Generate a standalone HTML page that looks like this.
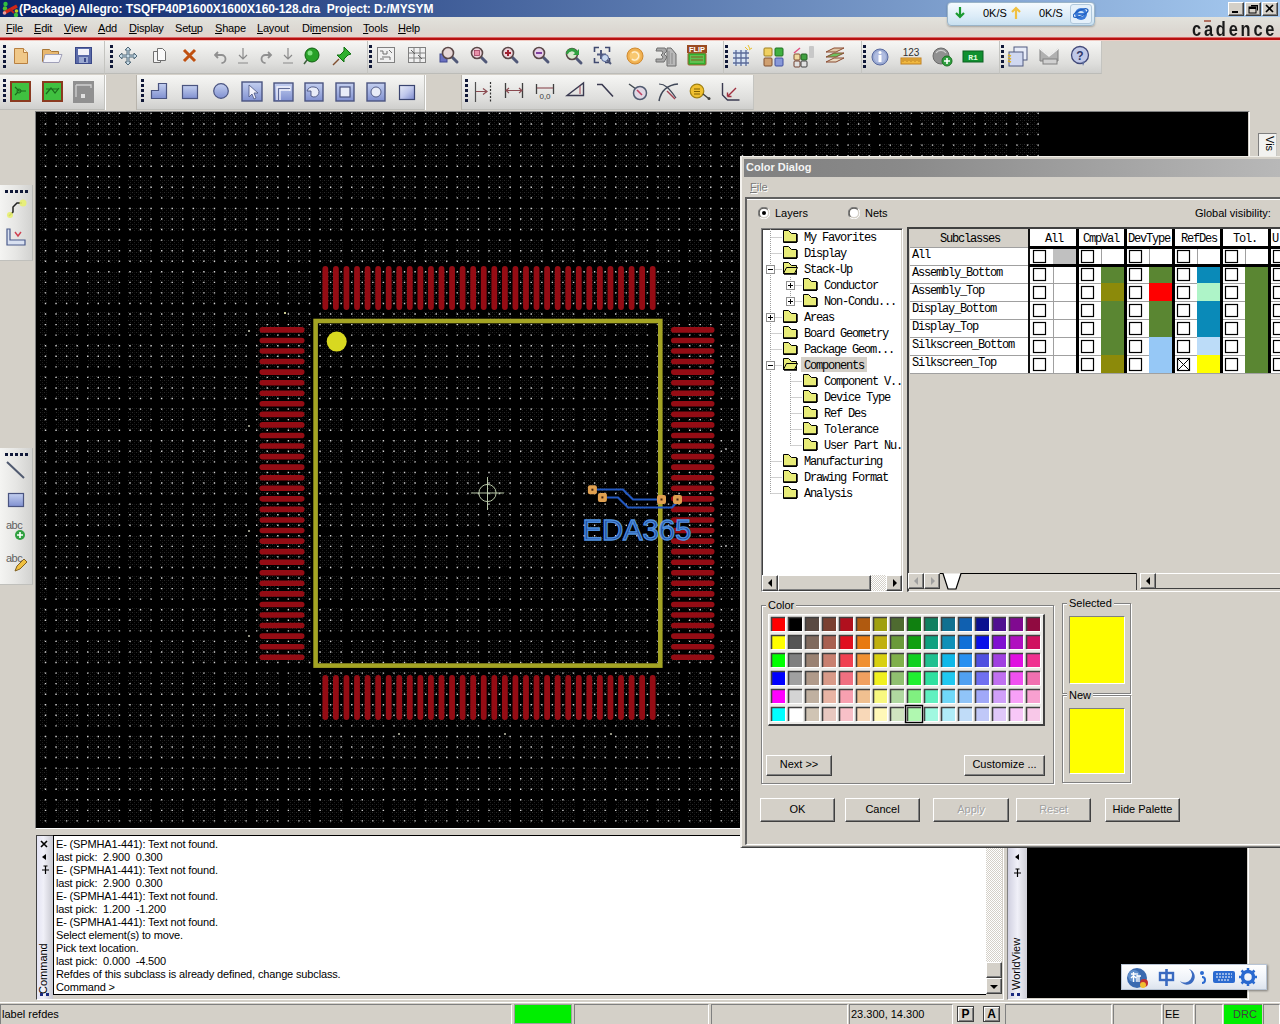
<!DOCTYPE html>
<html><head><meta charset="utf-8"><title>Allegro</title>
<style>
*{margin:0;padding:0;box-sizing:border-box}
html,body{width:1280px;height:1024px;overflow:hidden;background:#d4d0c8;font-family:"Liberation Sans",sans-serif;font-size:11px;color:#000}
.a{position:absolute}
.t{position:absolute;white-space:nowrap;line-height:1}
.mono{font-family:"Liberation Mono",monospace;font-size:12px;letter-spacing:-1.2px;white-space:nowrap;position:absolute;line-height:1}
.btn{position:absolute;background:#d4d0c8;border-top:1px solid #fff;border-left:1px solid #fff;border-right:1px solid #404040;border-bottom:1px solid #404040;box-shadow:inset -1px -1px 0 #808080;text-align:center;font-size:12px}
.sunk{border-top:1px solid #808080;border-left:1px solid #808080;border-right:1px solid #fff;border-bottom:1px solid #fff}
.grp{position:absolute;border:1px solid #808080;box-shadow:1px 1px 0 #fff, inset 1px 1px 0 #fff}
.glab{position:absolute;background:#d4d0c8;padding:0 2px;font-size:11px;line-height:12px}
</style></head><body>

<div class="a" style="left:0;top:0;width:1280px;height:17px;background:linear-gradient(90deg,#0a246a 0%,#a6caf0 100%)"></div>
<svg class="a" style="left:1px;top:1px" width="18" height="16" viewBox="0 0 18 16">
<circle cx="4.5" cy="3" r="2.2" fill="#30c040"/><circle cx="4" cy="7.5" r="2.2" fill="#50c030"/><circle cx="15" cy="14" r="2.2" fill="#40c040"/><circle cx="15.5" cy="10" r="1.8" fill="#c0d020"/>
<path d="M3 12 L16 5" stroke="#d02818" stroke-width="3.5"/><path d="M9 8 L13 12" stroke="#c02020" stroke-width="2"/><circle cx="3.5" cy="12" r="1.8" fill="#e8a0a0"/>
</svg>
<div class="t" id="title" style="left:19px;top:3px;color:#fff;font-weight:bold;font-size:12px;letter-spacing:-0.08px">(Package) Allegro: TSQFP40P1600X1600X160-128.dra&nbsp; Project: D:/MYSYM</div>
<div class="a" style="left:1228px;top:2px;width:16px;height:14px;background:#d4d0c8;border-top:1px solid #fff;border-left:1px solid #fff;border-right:1px solid #404040;border-bottom:1px solid #404040;box-shadow:inset -1px -1px 0 #808080"></div>
<div class="a" style="left:1245px;top:2px;width:16px;height:14px;background:#d4d0c8;border-top:1px solid #fff;border-left:1px solid #fff;border-right:1px solid #404040;border-bottom:1px solid #404040;box-shadow:inset -1px -1px 0 #808080"></div>
<div class="a" style="left:1262px;top:2px;width:16px;height:14px;background:#d4d0c8;border-top:1px solid #fff;border-left:1px solid #fff;border-right:1px solid #404040;border-bottom:1px solid #404040;box-shadow:inset -1px -1px 0 #808080"></div>
<svg class="a" style="left:1228px;top:2px" width="50" height="14">
<rect x="4" y="9" width="6" height="2" fill="#000"/>
<rect x="21" y="5" width="7" height="6" fill="none" stroke="#000" stroke-width="1"/><rect x="21" y="5" width="7" height="2" fill="#000"/>
<path d="M23.5 3.5 h6 v5" fill="none" stroke="#000"/><rect x="23" y="3" width="7" height="1.5" fill="#000"/>
<path d="M38 3 L45 10 M45 3 L38 10" stroke="#000" stroke-width="1.6"/>
</svg>
<div class="a" style="left:0;top:17px;width:1280px;height:21px;background:linear-gradient(180deg,#e2e2dc 0%,#dcd8d2 60%,#e4d4cc 100%)"></div>
<div class="a" style="left:0;top:37px;width:1280px;height:1px;background:#d86868"></div><div class="a" style="left:0;top:38px;width:1280px;height:2px;background:#b81010"></div>
<div class="a" style="left:0;top:40px;width:1280px;height:1px;background:#f0c8c0"></div>
<div class="t" style="left:6px;top:23px;font-size:11px;letter-spacing:-0.2px;color:#000"><u>F</u>ile</div>
<div class="t" style="left:34px;top:23px;font-size:11px;letter-spacing:-0.2px;color:#000"><u>E</u>dit</div>
<div class="t" style="left:64px;top:23px;font-size:11px;letter-spacing:-0.2px;color:#000"><u>V</u>iew</div>
<div class="t" style="left:98px;top:23px;font-size:11px;letter-spacing:-0.2px;color:#000"><u>A</u>dd</div>
<div class="t" style="left:129px;top:23px;font-size:11px;letter-spacing:-0.2px;color:#000"><u>D</u>isplay</div>
<div class="t" style="left:175px;top:23px;font-size:11px;letter-spacing:-0.2px;color:#000">Set<u>u</u>p</div>
<div class="t" style="left:215px;top:23px;font-size:11px;letter-spacing:-0.2px;color:#000"><u>S</u>hape</div>
<div class="t" style="left:257px;top:23px;font-size:11px;letter-spacing:-0.2px;color:#000"><u>L</u>ayout</div>
<div class="t" style="left:302px;top:23px;font-size:11px;letter-spacing:-0.2px;color:#000">Di<u>m</u>ension</div>
<div class="t" style="left:363px;top:23px;font-size:11px;letter-spacing:-0.2px;color:#000"><u>T</u>ools</div>
<div class="t" style="left:398px;top:23px;font-size:11px;letter-spacing:-0.2px;color:#000"><u>H</u>elp</div>
<div class="t" style="left:1192px;top:18px;font-size:21px;font-weight:bold;letter-spacing:3.6px;color:#1a1a1a;transform-origin:0 0;transform:scaleX(.78)">cadence</div>
<div class="a" style="left:1204px;top:20px;width:7px;height:2px;background:#b07060"></div>
<div class="a" style="left:947px;top:2px;width:148px;height:24px;border-radius:4px;background:linear-gradient(180deg,#f4fafe 0%,#dcecf8 60%,#c8e0f0 100%);border:1px solid #9ab4c8;box-shadow:0 1px 2px rgba(0,0,0,.25)"></div>
<svg class="a" style="left:952px;top:5px" width="16" height="16"><path d="M8 2 v9 M4 8 l4 4 l4 -4" stroke="#1a9a30" stroke-width="2.2" fill="none"/></svg>
<div class="t" style="left:983px;top:8px;font-size:11px;color:#000">0K/S</div>
<svg class="a" style="left:1010px;top:5px" width="12" height="16"><path d="M6 14 v-10 M2 7 l4 -4 l4 4" stroke="#f0c040" stroke-width="2.2" fill="none"/></svg>
<div class="t" style="left:1039px;top:8px;font-size:11px;color:#000">0K/S</div>
<div class="a" style="left:1070px;top:4px;width:22px;height:20px;border:1px solid #b0c8dc;border-radius:3px;background:#e4f0fa"></div>
<svg class="a" style="left:1073px;top:6px" width="16" height="16"><circle cx="8" cy="8" r="6" fill="#3a7ad8"/><circle cx="8" cy="8" r="3" fill="#cfe4f8"/><rect x="5" y="7" width="7" height="2" fill="#3a7ad8"/><ellipse cx="8" cy="7" rx="8" ry="3" fill="none" stroke="#2060c0" stroke-width="1.2" transform="rotate(-25 8 8)"/></svg>

<div class="a" style="left:0px;top:41px;width:105px;height:33px;background:linear-gradient(180deg,#f6f6f4 0%,#ececea 30%,#dededc 70%,#cfcfcd 100%);border-bottom:1px solid #bcbcb8;border-right:1px solid #c4c4c0"></div>
<div class="a" style="left:3px;top:45px;width:3px;height:3px;background:#101838"></div>
<div class="a" style="left:3px;top:50px;width:3px;height:3px;background:#101838"></div>
<div class="a" style="left:3px;top:55px;width:3px;height:3px;background:#101838"></div>
<div class="a" style="left:3px;top:60px;width:3px;height:3px;background:#101838"></div>
<div class="a" style="left:3px;top:65px;width:3px;height:3px;background:#101838"></div>
<div class="a" style="left:105px;top:41px;width:263px;height:33px;background:linear-gradient(180deg,#f6f6f4 0%,#ececea 30%,#dededc 70%,#cfcfcd 100%);border-bottom:1px solid #bcbcb8;border-right:1px solid #c4c4c0"></div>
<div class="a" style="left:110px;top:45px;width:3px;height:3px;background:#101838"></div>
<div class="a" style="left:110px;top:50px;width:3px;height:3px;background:#101838"></div>
<div class="a" style="left:110px;top:55px;width:3px;height:3px;background:#101838"></div>
<div class="a" style="left:110px;top:60px;width:3px;height:3px;background:#101838"></div>
<div class="a" style="left:110px;top:65px;width:3px;height:3px;background:#101838"></div>
<div class="a" style="left:368px;top:41px;width:356px;height:33px;background:linear-gradient(180deg,#f6f6f4 0%,#ececea 30%,#dededc 70%,#cfcfcd 100%);border-bottom:1px solid #bcbcb8;border-right:1px solid #c4c4c0"></div>
<div class="a" style="left:369px;top:45px;width:3px;height:3px;background:#101838"></div>
<div class="a" style="left:369px;top:50px;width:3px;height:3px;background:#101838"></div>
<div class="a" style="left:369px;top:55px;width:3px;height:3px;background:#101838"></div>
<div class="a" style="left:369px;top:60px;width:3px;height:3px;background:#101838"></div>
<div class="a" style="left:369px;top:65px;width:3px;height:3px;background:#101838"></div>
<div class="a" style="left:724px;top:41px;width:138px;height:33px;background:linear-gradient(180deg,#f6f6f4 0%,#ececea 30%,#dededc 70%,#cfcfcd 100%);border-bottom:1px solid #bcbcb8;border-right:1px solid #c4c4c0"></div>
<div class="a" style="left:725px;top:45px;width:3px;height:3px;background:#101838"></div>
<div class="a" style="left:725px;top:50px;width:3px;height:3px;background:#101838"></div>
<div class="a" style="left:725px;top:55px;width:3px;height:3px;background:#101838"></div>
<div class="a" style="left:725px;top:60px;width:3px;height:3px;background:#101838"></div>
<div class="a" style="left:725px;top:65px;width:3px;height:3px;background:#101838"></div>
<div class="a" style="left:862px;top:41px;width:138px;height:33px;background:linear-gradient(180deg,#f6f6f4 0%,#ececea 30%,#dededc 70%,#cfcfcd 100%);border-bottom:1px solid #bcbcb8;border-right:1px solid #c4c4c0"></div>
<div class="a" style="left:863px;top:45px;width:3px;height:3px;background:#101838"></div>
<div class="a" style="left:863px;top:50px;width:3px;height:3px;background:#101838"></div>
<div class="a" style="left:863px;top:55px;width:3px;height:3px;background:#101838"></div>
<div class="a" style="left:863px;top:60px;width:3px;height:3px;background:#101838"></div>
<div class="a" style="left:863px;top:65px;width:3px;height:3px;background:#101838"></div>
<div class="a" style="left:1000px;top:41px;width:102px;height:33px;background:linear-gradient(180deg,#f6f6f4 0%,#ececea 30%,#dededc 70%,#cfcfcd 100%);border-bottom:1px solid #bcbcb8;border-right:1px solid #c4c4c0"></div>
<div class="a" style="left:1001px;top:45px;width:3px;height:3px;background:#101838"></div>
<div class="a" style="left:1001px;top:50px;width:3px;height:3px;background:#101838"></div>
<div class="a" style="left:1001px;top:55px;width:3px;height:3px;background:#101838"></div>
<div class="a" style="left:1001px;top:60px;width:3px;height:3px;background:#101838"></div>
<div class="a" style="left:1001px;top:65px;width:3px;height:3px;background:#101838"></div>
<div class="a" style="left:0px;top:75px;width:105px;height:35px;background:linear-gradient(180deg,#f6f6f4 0%,#ececea 30%,#dededc 70%,#cfcfcd 100%);border-bottom:1px solid #bcbcb8;border-right:1px solid #c4c4c0"></div>
<div class="a" style="left:3px;top:79px;width:3px;height:3px;background:#101838"></div>
<div class="a" style="left:3px;top:84px;width:3px;height:3px;background:#101838"></div>
<div class="a" style="left:3px;top:89px;width:3px;height:3px;background:#101838"></div>
<div class="a" style="left:3px;top:94px;width:3px;height:3px;background:#101838"></div>
<div class="a" style="left:3px;top:99px;width:3px;height:3px;background:#101838"></div>
<div class="a" style="left:137px;top:75px;width:288px;height:35px;background:linear-gradient(180deg,#f6f6f4 0%,#ececea 30%,#dededc 70%,#cfcfcd 100%);border-bottom:1px solid #bcbcb8;border-right:1px solid #c4c4c0"></div>
<div class="a" style="left:141px;top:79px;width:3px;height:3px;background:#101838"></div>
<div class="a" style="left:141px;top:84px;width:3px;height:3px;background:#101838"></div>
<div class="a" style="left:141px;top:89px;width:3px;height:3px;background:#101838"></div>
<div class="a" style="left:141px;top:94px;width:3px;height:3px;background:#101838"></div>
<div class="a" style="left:141px;top:99px;width:3px;height:3px;background:#101838"></div>
<div class="a" style="left:462px;top:75px;width:292px;height:35px;background:linear-gradient(180deg,#f6f6f4 0%,#ececea 30%,#dededc 70%,#cfcfcd 100%);border-bottom:1px solid #bcbcb8;border-right:1px solid #c4c4c0"></div>
<div class="a" style="left:465px;top:79px;width:3px;height:3px;background:#101838"></div>
<div class="a" style="left:465px;top:84px;width:3px;height:3px;background:#101838"></div>
<div class="a" style="left:465px;top:89px;width:3px;height:3px;background:#101838"></div>
<div class="a" style="left:465px;top:94px;width:3px;height:3px;background:#101838"></div>
<div class="a" style="left:465px;top:99px;width:3px;height:3px;background:#101838"></div>
<div class="a" style="left:425px;top:75px;width:37px;height:35px;border-left:1px solid #fff;border-right:1px solid #b8b4ac"></div>
<div class="a" style="left:105px;top:75px;width:32px;height:35px;border-left:1px solid #fff;border-right:1px solid #b8b4ac"></div>
<svg class="a" style="left:13px;top:47px" width="16" height="18" viewBox="0 0 16 18"><path d="M1.5 1.5 h9 l4 4 v11 h-13z" fill="#f0c888" stroke="#b88040"/><path d="M10.5 1.5 v4 h4" fill="#fff3d8" stroke="#b88040"/></svg>
<svg class="a" style="left:41px;top:47px" width="23" height="17" viewBox="0 0 23 17"><path d="M1.5 2.5 h7 l2 2 h7 v10 h-16z" fill="#e8b870" stroke="#a87838"/><path d="M4 7.5 h17 l-3 8 h-16z" fill="#f4f4fa" stroke="#a0a0b8"/></svg>
<svg class="a" style="left:75px;top:47px" width="17" height="18" viewBox="0 0 17 18"><rect x=".5" y=".5" width="16" height="16" fill="#5a6aa8" stroke="#3a4888"/><rect x="3" y="2" width="11" height="6" fill="#f2f2f8"/><rect x="4" y="10" width="9" height="6" fill="#9aa8d0"/><rect x="9" y="11" width="2" height="4" fill="#3a4888"/></svg>
<svg class="a" style="left:118px;top:46px" width="20" height="20" viewBox="0 0 20 20"><path d="M10 1 l3 3 h-2 v5 h5 v-2 l3 3 l-3 3 v-2 h-5 v5 h2 l-3 3 l-3 -3 h2 v-5 h-5 v2 l-3 -3 l3 -3 v2 h5 v-5 h-2z" fill="#c8dce8" stroke="#506878" stroke-width="1"/></svg>
<svg class="a" style="left:152px;top:47px" width="15" height="17" viewBox="0 0 15 17"><path d="M1.5 4.5 h7 v11 h-7z" fill="#f4f4f4" stroke="#707070"/><path d="M5.5 1.5 h5 l3 3 v9 h-8z" fill="#fafafa" stroke="#707070"/></svg>
<svg class="a" style="left:182px;top:48px" width="15" height="15" viewBox="0 0 15 15"><path d="M2 2 L13 13 M13 2 L2 13" stroke="#c05010" stroke-width="3"/></svg>
<svg class="a" style="left:214px;top:48px" width="14" height="16" viewBox="0 0 14 16"><path d="M4 4 l-3 3 l3 3 M1.5 7 h6 a4 4 0 0 1 0 8" stroke="#909090" stroke-width="1.8" fill="none"/></svg>
<svg class="a" style="left:237px;top:47px" width="12" height="18" viewBox="0 0 12 18"><path d="M6 1 v11 M2 8 l4 4 l4 -4 M1 16 h10" stroke="#8a8a8a" stroke-width="1.2" fill="none"/></svg>
<svg class="a" style="left:258px;top:48px" width="15" height="16" viewBox="0 0 15 16"><path d="M10 4 l3 3 l-3 3 M13.5 7 h-6 a4 4 0 0 0 0 8" stroke="#909090" stroke-width="1.8" fill="none"/></svg>
<svg class="a" style="left:282px;top:47px" width="12" height="18" viewBox="0 0 12 18"><path d="M6 1 v11 M2 8 l4 4 l4 -4 M1 16 h10" stroke="#8a8a8a" stroke-width="1.2" fill="none"/></svg>
<svg class="a" style="left:302px;top:47px" width="19" height="19" viewBox="0 0 19 19"><circle cx="10" cy="8" r="7" fill="#28a028" stroke="#106010"/><circle cx="8" cy="6" r="2.5" fill="#80e080"/><path d="M5 13 L2 17" stroke="#406040" stroke-width="1.5"/></svg>
<svg class="a" style="left:331px;top:45px" width="22" height="22" viewBox="0 0 22 22"><path d="M13 2 l7 7 l-3 1 l-4 4 l0 3 l-7 -7 l3 0 l4 -4z" fill="#30b030" stroke="#107010"/><path d="M8 14 L2 20" stroke="#805030" stroke-width="1.5"/></svg>
<svg class="a" style="left:377px;top:47px" width="19" height="17" viewBox="0 0 19 17"><rect x=".5" y=".5" width="17" height="15" fill="#f0f0f0" stroke="#808080"/><path d="M3 4 h3 v3 h4 v-3 M5 10 h8 v3 M12 3 l3 3 M3 12 h4" stroke="#707070" fill="none"/></svg>
<svg class="a" style="left:408px;top:47px" width="19" height="17" viewBox="0 0 19 17"><rect x=".5" y=".5" width="17" height="15" fill="#f0f0f0" stroke="#808080"/><path d="M1 6 h16 M1 11 h16 M6 1 v15 M12 1 v15" stroke="#808080" fill="none"/><path d="M3 3 l4 4 M10 8 l4 4" stroke="#606060"/></svg>
<svg class="a" style="left:438px;top:45px" width="22" height="22" viewBox="0 0 22 22"><rect x="2" y="9" width="7" height="8" fill="#6a70c0" stroke="#404890"/><path d="M14 12 L19 17" stroke="#505878" stroke-width="3" stroke-linecap="round"/><circle cx="10" cy="8" r="5.5" fill="#e8d8d8" stroke="#5a4848" stroke-width="1.6"/></svg>
<svg class="a" style="left:468px;top:45px" width="22" height="22" viewBox="0 0 22 22"><path d="M13 12 L18 17" stroke="#505878" stroke-width="3" stroke-linecap="round"/><circle cx="9" cy="8" r="5.5" fill="#f0d4dc" stroke="#5a4848" stroke-width="1.6"/><rect x="6.5" y="5.5" width="5" height="5" fill="#e890a8" stroke="#a04060" stroke-width=".8"/></svg>
<svg class="a" style="left:499px;top:45px" width="22" height="22" viewBox="0 0 22 22"><path d="M13 12 L18 17" stroke="#505878" stroke-width="3" stroke-linecap="round"/><circle cx="9" cy="8" r="5.5" fill="#f0d4dc" stroke="#5a4848" stroke-width="1.6"/><path d="M9 5 v6 M6 8 h6" stroke="#a02030" stroke-width="2"/></svg>
<svg class="a" style="left:530px;top:45px" width="22" height="22" viewBox="0 0 22 22"><path d="M13 12 L18 17" stroke="#505878" stroke-width="3" stroke-linecap="round"/><circle cx="9" cy="8" r="5.5" fill="#e8d0e8" stroke="#5a4848" stroke-width="1.6"/><path d="M6 8 h6" stroke="#8040a0" stroke-width="2"/></svg>
<svg class="a" style="left:562px;top:46px" width="22" height="22" viewBox="0 0 22 22"><path d="M14 12 L19 17" stroke="#505878" stroke-width="3" stroke-linecap="round"/><circle cx="10" cy="8" r="5.5" fill="#d8e8d0" stroke="#5a4848" stroke-width="1.6"/><path d="M4 8 a6 6 0 0 1 11 -3 l2 -2 v6 h-6 l2 -2 a4 4 0 0 0 -7 1z" fill="#30a040"/></svg>
<svg class="a" style="left:593px;top:46px" width="22" height="22" viewBox="0 0 22 22"><path d="M1.5 6 v-4.5 h4.5 M12 1.5 h4.5 v4.5 M16.5 12 v4.5 h-4.5 M6 16.5 h-4.5 v-4.5" stroke="#404a70" stroke-width="1.6" fill="none"/><path d="M8 4 v9 M4 8.5 h9" stroke="#505a80" stroke-width="2"/><circle cx="12" cy="12" r="3.5" fill="#c8d8f0" stroke="#506090"/><path d="M14 14 L18 18" stroke="#505878" stroke-width="2"/></svg>
<svg class="a" style="left:626px;top:47px" width="18" height="18" viewBox="0 0 18 18"><circle cx="9" cy="9" r="8" fill="#f0b050" stroke="#d08a30"/><circle cx="9" cy="9" r="5.5" fill="#f8c870"/><path d="M6 6 a4 4 0 1 1 0 6" stroke="#fff0d0" stroke-width="1.5" fill="none"/></svg>
<svg class="a" style="left:655px;top:46px" width="22" height="21" viewBox="0 0 22 21"><path d="M2 2 h8 l2 3 l-3 3 l3 3 l-3 5 h-8 v-3 h6 l1 -2 l-2 -2 l2 -2 l-1 -2 h-6z" fill="#a8a8a8" stroke="#707070"/><path d="M12 2 h4 l5 6 v12 h-9z" fill="#b8b8b8" stroke="#6a6a6a"/><path d="M14 5 v13 M17 7 v11" stroke="#888"/></svg>
<svg class="a" style="left:686px;top:44px" width="22" height="23" viewBox="0 0 22 23"><rect x="1" y="1" width="20" height="8" fill="#9a4a20"/><text x="11" y="8" font-family="Liberation Sans" font-size="7.5" font-weight="bold" fill="#fff" text-anchor="middle">FLIP</text><rect x="2" y="9" width="18" height="12" rx="1" fill="#30b030" stroke="#a06030"/><rect x="4" y="11" width="14" height="8" fill="#60c050"/><path d="M5 13 h12 M5 16 h12" stroke="#806020" stroke-width="1"/></svg>
<svg class="a" style="left:731px;top:44px" width="22" height="24" viewBox="0 0 22 24"><rect x="2" y="6" width="15" height="15" fill="#d8e4f4"/><path d="M2 9 h16 M2 14 h16 M2 19 h16 M5 6 v16 M10 6 v16 M15 6 v16" stroke="#5a6a98" stroke-width="1.3"/><path d="M17 1 l2 4 M21 4 l-3 2 M14 3 l3 3" stroke="#e8c030" stroke-width="1"/></svg>
<svg class="a" style="left:762px;top:46px" width="23" height="21" viewBox="0 0 23 21"><rect x="2" y="2" width="8" height="8" rx="1" fill="#f0d060" stroke="#a08020"/><rect x="13" y="2" width="8" height="8" rx="1" fill="#40b040" stroke="#207020"/><rect x="2" y="12" width="8" height="8" rx="1" fill="#d0a070" stroke="#805030"/><rect x="13" y="12" width="8" height="8" rx="1" fill="#8898d8" stroke="#4050a0"/></svg>
<svg class="a" style="left:791px;top:45px" width="25" height="23" viewBox="0 0 25 23"><path d="M3 8 l6 -5" stroke="#e05080" stroke-width="1.5"/><rect x="3" y="9" width="6" height="6" rx="1" fill="#f0d8a0" stroke="#805030"/><rect x="10" y="9" width="6" height="6" rx="1" fill="#40a040" stroke="#206020"/><rect x="3" y="16" width="6" height="6" rx="1" fill="#e0e0e0" stroke="#704030"/><rect x="10" y="16" width="6" height="6" rx="1" fill="#e0e0e0" stroke="#404040"/><rect x="18" y="1" width="5" height="12" rx="1" fill="#c8c8c8"/></svg>
<svg class="a" style="left:824px;top:45px" width="22" height="22" viewBox="0 0 22 22"><path d="M2 17 l8 -4 h10 l-8 4z" fill="#e8d8c0" stroke="#8a4a30"/><path d="M2 12 l8 -4 h10 l-8 4z" fill="#70c060" stroke="#8a4a30"/><path d="M2 7 l8 -4 h10 l-8 4z" fill="#e0c8a8" stroke="#8a4a30"/></svg>
<svg class="a" style="left:871px;top:48px" width="18" height="18" viewBox="0 0 18 18"><circle cx="9" cy="9" r="8" fill="#98a8d0" stroke="#5868a0"/><circle cx="9" cy="9" r="6" fill="#b0bce0"/><rect x="7.5" y="7" width="3" height="7" fill="#fff"/><circle cx="9" cy="4.5" r="1.5" fill="#fff"/></svg>
<svg class="a" style="left:900px;top:47px" width="24" height="19" viewBox="0 0 24 19"><text x="11" y="9" font-family="Liberation Sans" font-size="10" fill="#303030" text-anchor="middle">123</text><rect x="1" y="11" width="20" height="6" fill="#f0b840" stroke="#c08020"/><path d="M3 12 v3 M5 12 v2 M7 12 v3 M9 12 v2 M11 12 v3 M13 12 v2 M15 12 v3 M17 12 v2 M19 12 v3" stroke="#a06010" stroke-width=".6"/></svg>
<svg class="a" style="left:932px;top:47px" width="22" height="21" viewBox="0 0 22 21"><circle cx="9" cy="9" r="8" fill="#909090" stroke="#6a6a6a"/><path d="M4 6 a6 6 0 0 1 10 0" stroke="#d0d0d0" stroke-width="1.2" fill="none"/><circle cx="15" cy="14" r="5" fill="#30a040" stroke="#1a7020"/><path d="M15 11 v6 M12 14 h6" stroke="#fff" stroke-width="1.6"/></svg>
<svg class="a" style="left:962px;top:50px" width="22" height="14" viewBox="0 0 22 14"><rect x="1" y="1" width="20" height="11" fill="#109030" stroke="#0a6020"/><text x="11" y="10" font-family="Liberation Mono" font-size="8" font-weight="bold" fill="#e0ffe0" text-anchor="middle">R1</text></svg>
<svg class="a" style="left:1006px;top:45px" width="24" height="23" viewBox="0 0 24 23"><rect x="8" y="2" width="13" height="13" fill="#e8ecf8" stroke="#505a80"/><rect x="3" y="7" width="14" height="14" fill="#d0d8f0" stroke="#505a80"/><path d="M2 10 l3 1 M2 13 l3 1 M2 16 l3 1" stroke="#e0b020" stroke-width="1.6"/></svg>
<svg class="a" style="left:1038px;top:47px" width="22" height="19" viewBox="0 0 22 19"><path d="M2 2 l9 7 l9 -7 v12 h-18z" fill="#b0b0b0" stroke="#808080"/><path d="M2 2 l9 7 l9 -7" stroke="#f0f0f0" stroke-width="1.5" fill="none"/><rect x="5" y="12" width="14" height="5" fill="#d0d0d0" stroke="#808080"/></svg>
<svg class="a" style="left:1070px;top:45px" width="21" height="22" viewBox="0 0 21 22"><circle cx="10" cy="10" r="8.5" fill="#c0c8e8" stroke="#404878" stroke-width="1.3"/><path d="M12 17 l1 4 l2 -5" fill="#6070a0"/><text x="10" y="14.5" font-family="Liberation Sans" font-size="12" font-weight="bold" fill="#303868" text-anchor="middle">?</text></svg>
<svg width="0" height="0" style="position:absolute"><defs><linearGradient id="bgA" x1="0" y1="0" x2="0" y2="1"><stop offset="0" stop-color="#c4d0f0"/><stop offset="1" stop-color="#8090d0"/></linearGradient><linearGradient id="bgB" x1="0" y1="0" x2="1" y2="1"><stop offset="0" stop-color="#e8ecf8"/><stop offset=".5" stop-color="#c0c8ec"/><stop offset="1" stop-color="#7a88cc"/></linearGradient></defs></svg>
<svg class="a" style="left:9px;top:80px" width="23" height="23" viewBox="0 0 23 23"><rect x="1" y="1" width="21" height="21" fill="#8a3a20"/><rect x="3" y="3" width="17" height="17" fill="#40c040"/><path d="M6 7 l4 4 h7 M6 15 l3 -3" stroke="#1a6a1a" stroke-width="1.2" fill="none"/><circle cx="10" cy="11" r="2" fill="none" stroke="#1a6a1a"/></svg>
<svg class="a" style="left:41px;top:80px" width="23" height="23" viewBox="0 0 23 23"><rect x="1" y="1" width="21" height="21" fill="#8a3a20"/><rect x="3" y="3" width="17" height="17" fill="#40c040"/><path d="M5 14 l5 -6 l4 5 l4 -5 M5 9 h12" stroke="#1a6a1a" stroke-width="1.2" fill="none"/></svg>
<svg class="a" style="left:72px;top:80px" width="23" height="24" viewBox="0 0 23 24"><rect x="1" y="1" width="21" height="22" fill="#909090"/><path d="M4 5 h15 v3 M4 5 v12" stroke="#d0d0d0" stroke-width="1.3" fill="none"/><rect x="9" y="14" width="4" height="4" fill="#e0e0e0"/></svg>
<svg class="a" style="left:150px;top:82px" width="18" height="18" viewBox="0 0 18 18"><path d="M8.5 1.5 h8 v15 h-15 v-8 h7z" fill="url(#bgA)" stroke="#4a5480" stroke-width="1.2"/></svg>
<svg class="a" style="left:181px;top:84px" width="18" height="16" viewBox="0 0 18 16"><rect x="1.5" y="1.5" width="15" height="13" fill="url(#bgA)" stroke="#4a5480" stroke-width="1.2"/></svg>
<svg class="a" style="left:212px;top:82px" width="18" height="18" viewBox="0 0 18 18"><circle cx="9" cy="9" r="7.3" fill="url(#bgA)" stroke="#4a5480" stroke-width="1.2"/></svg>
<svg class="a" style="left:241px;top:81px" width="22" height="21" viewBox="0 0 22 21"><rect x="1" y="1" width="20" height="19" fill="url(#bgA)" stroke="#4a5480" stroke-width="1.4"/><path d="M8 4 v12 l3 -3 l2 5 l2 -1 l-2 -5 h4z" fill="#f4f4fc" stroke="#4a5480" stroke-width=".8"/></svg>
<svg class="a" style="left:273px;top:82px" width="21" height="20" viewBox="0 0 21 20"><rect x="1" y="1" width="19" height="18" fill="url(#bgA)" stroke="#4a5480" stroke-width="1.4"/><path d="M4 18 v-13 h13 v4 M7 18 v-10 h10" stroke="#f4f4fc" stroke-width="1.3" fill="none"/><path d="M5.5 18 v-11.5 h11.5" stroke="#4a5480" stroke-width=".8" fill="none"/></svg>
<svg class="a" style="left:304px;top:82px" width="20" height="20" viewBox="0 0 20 20"><rect x="1" y="1" width="18" height="18" fill="url(#bgA)" stroke="#4a5480" stroke-width="1.4"/><path d="M10 5 a5 5 0 1 1 -3 9 v-5 h-4 a6 6 0 0 1 7 -4z" fill="#e8ecf8" stroke="#4a5480" stroke-width=".9"/></svg>
<svg class="a" style="left:335px;top:82px" width="20" height="20" viewBox="0 0 20 20"><rect x="1" y="1" width="18" height="18" fill="url(#bgA)" stroke="#4a5480" stroke-width="1.4"/><rect x="5" y="5" width="10" height="10" fill="#e8ecf8" stroke="#4a5480" stroke-width="1.2"/></svg>
<svg class="a" style="left:366px;top:82px" width="20" height="20" viewBox="0 0 20 20"><rect x="1" y="1" width="18" height="18" fill="url(#bgA)" stroke="#4a5480" stroke-width="1.4"/><circle cx="10" cy="10" r="5" fill="#e8ecf8" stroke="#4a5480" stroke-width=".9"/></svg>
<svg class="a" style="left:398px;top:84px" width="18" height="17" viewBox="0 0 18 17"><rect x="1.5" y="1.5" width="15" height="14" fill="url(#bgB)" stroke="#3a4470" stroke-width="1.2"/></svg>
<svg class="a" style="left:473px;top:80px" width="20" height="24" viewBox="0 0 20 24"><path d="M2.5 2 v20" stroke="#505050" stroke-width="1.2"/><path d="M3 11.5 h11 M10 8.5 l4 3 l-4 3" stroke="#8a4a50" stroke-width="1.2" fill="none"/><path d="M17.5 2 v20" stroke="#303030" stroke-width="1.2" stroke-dasharray="2 1.5"/></svg>
<svg class="a" style="left:503px;top:82px" width="22" height="18" viewBox="0 0 22 18"><path d="M2.5 1 v15 M19.5 1 v15" stroke="#404040" stroke-width="1.3"/><path d="M3 8.5 h16 M6 6 l-3 2.5 l3 2.5 M16 6 l3 2.5 l-3 2.5" stroke="#8a4a50" stroke-width="1.1" fill="none"/></svg>
<svg class="a" style="left:535px;top:81px" width="21" height="20" viewBox="0 0 21 20"><path d="M1.5 3 v10 M18.5 3 v10" stroke="#404040" stroke-width="1.3"/><path d="M2 7 h16" stroke="#8a4a50" stroke-width="1.1"/><text x="10" y="18" font-family="Liberation Sans" font-size="8" fill="#404040" text-anchor="middle">0,0</text></svg>
<svg class="a" style="left:565px;top:81px" width="21" height="17" viewBox="0 0 21 17"><path d="M2 14.5 L18.5 2 V14.5z" fill="none" stroke="#3a3a50" stroke-width="1.4"/><path d="M15 5 v8" stroke="#a04050" stroke-width="1"/></svg>
<svg class="a" style="left:596px;top:83px" width="20" height="16" viewBox="0 0 20 16"><path d="M1 1.5 h5 l11 12" stroke="#3a3a50" stroke-width="1.6" fill="none"/></svg>
<svg class="a" style="left:628px;top:82px" width="22" height="20" viewBox="0 0 22 20"><path d="M1 2 l7 5" stroke="#404850" stroke-width="1.5"/><circle cx="12" cy="11" r="6.5" fill="#e0d8e4" stroke="#505a70" stroke-width="1.5"/><path d="M9 8 l5 5" stroke="#c04060" stroke-width="1.6"/></svg>
<svg class="a" style="left:657px;top:82px" width="23" height="20" viewBox="0 0 23 20"><path d="M2 19 C4 8 10 3 21 2" stroke="#404858" stroke-width="1.5" fill="none"/><path d="M2 2 C8 2 12 6 19 16" stroke="#404858" stroke-width="1.2" fill="none"/><path d="M10 9 l8 8" stroke="#a04050" stroke-width="1.5"/></svg>
<svg class="a" style="left:688px;top:82px" width="24" height="20" viewBox="0 0 24 20"><circle cx="9" cy="9" r="6.8" fill="#f0c030" stroke="#a08010" stroke-width="1.2"/><path d="M6 7 h6 M6 9.5 h6 M6 12 h6" stroke="#806000" stroke-width="1"/><path d="M15 12 l5 4" stroke="#404040" stroke-width="1.4"/><circle cx="21" cy="16.5" r="1.5" fill="#404040"/></svg>
<svg class="a" style="left:720px;top:81px" width="22" height="21" viewBox="0 0 22 21"><path d="M2.5 2 v12 l5 5 h12" stroke="#3a3a50" stroke-width="1.4" fill="none"/><path d="M8 15 l8 -8 M7.5 15.5 v-4 M7.5 15.5 h4" stroke="#a03040" stroke-width="1.4" fill="none"/></svg>
<div class="a" style="left:0;top:185px;width:33px;height:76px;background:linear-gradient(90deg,#f4f4f2 0%,#e6e6e4 50%,#d2d2d0 100%);border-right:1px solid #b8b8b4;border-bottom:1px solid #c0c0bc"></div>
<div class="a" style="left:5px;top:190px;width:3px;height:3px;background:#101838"></div>
<div class="a" style="left:10px;top:190px;width:3px;height:3px;background:#101838"></div>
<div class="a" style="left:15px;top:190px;width:3px;height:3px;background:#101838"></div>
<div class="a" style="left:20px;top:190px;width:3px;height:3px;background:#101838"></div>
<div class="a" style="left:25px;top:190px;width:3px;height:3px;background:#101838"></div>
<div class="a" style="left:0;top:448px;width:33px;height:137px;background:linear-gradient(90deg,#f4f4f2 0%,#e6e6e4 50%,#d2d2d0 100%);border-right:1px solid #b8b8b4;border-bottom:1px solid #c0c0bc"></div>
<div class="a" style="left:5px;top:453px;width:3px;height:3px;background:#101838"></div>
<div class="a" style="left:10px;top:453px;width:3px;height:3px;background:#101838"></div>
<div class="a" style="left:15px;top:453px;width:3px;height:3px;background:#101838"></div>
<div class="a" style="left:20px;top:453px;width:3px;height:3px;background:#101838"></div>
<div class="a" style="left:25px;top:453px;width:3px;height:3px;background:#101838"></div>
<svg class="a" style="left:5px;top:198px" width="24" height="22" viewBox="0 0 24 22"><path d="M4 18 l4 -4 v-5 l4 -4 h5" stroke="#202020" stroke-width="1.5" fill="none"/><circle cx="5" cy="17" r="3" fill="#e8f070" opacity=".9"/><circle cx="18" cy="5" r="3.5" fill="#e8f070" opacity=".9"/></svg>
<svg class="a" style="left:5px;top:227px" width="22" height="22" viewBox="0 0 22 22"><path d="M2 2 v16 h18 v-5 h-15 v-11z" fill="#d8e0f0" stroke="#4a5a8a" stroke-width="1.2"/><path d="M10 5 l3 4 l3 -4" stroke="#d04050" stroke-width="1.4" fill="none"/></svg>
<svg class="a" style="left:5px;top:459px" width="22" height="22" viewBox="0 0 22 22"><path d="M2 3 L19 19" stroke="#505a70" stroke-width="2"/></svg>
<svg class="a" style="left:7px;top:492px" width="19" height="17" viewBox="0 0 19 17"><rect x="1.5" y="1.5" width="15" height="13" fill="url(#bgA)" stroke="#4a5480" stroke-width="1.2"/></svg>
<div class="t" style="left:6px;top:520px;font-size:11px;color:#606060;letter-spacing:-.5px">abc</div>
<svg class="a" style="left:14px;top:529px" width="12" height="12" viewBox="0 0 12 12"><circle cx="6" cy="6" r="5" fill="#30a040"/><path d="M6 3 v6 M3 6 h6" stroke="#fff" stroke-width="1.6"/></svg>
<div class="t" style="left:6px;top:553px;font-size:11px;color:#606060;letter-spacing:-.5px">abc</div>
<svg class="a" style="left:12px;top:557px" width="16" height="16" viewBox="0 0 16 16"><path d="M3 14 l2 -5 l7 -7 l3 3 l-7 7z" fill="#f0c040" stroke="#806020"/></svg>
<div class="a" style="left:35px;top:111px;width:1215px;height:718px;border-top:1px solid #808080;border-left:1px solid #808080;border-right:1px solid #fff;border-bottom:1px solid #fff"></div>
<div class="a" style="left:36px;top:112px;width:1212px;height:716px;background:#000"></div>
<svg class="a" style="left:0;top:0" width="1280" height="1024" viewBox="0 0 1280 1024"><defs><pattern id="jt" patternUnits="userSpaceOnUse" width="4" height="4"><rect x="0" y="0" width="1" height="1" fill="#2a2a2a"/><rect x="2" y="2" width="1" height="1" fill="#1e1e1e"/><rect x="2" y="0" width="1" height="1" fill="#101010"/></pattern></defs><path d="M40 112h8v24h-8zM40 144h8v24h-8zM40 176h8v24h-8zM40 208h8v24h-8zM40 240h8v24h-8zM40 272h8v32h-8zM40 312h8v24h-8zM40 344h8v24h-8zM40 376h8v24h-8zM40 408h8v24h-8zM40 440h8v24h-8zM40 472h8v24h-8zM40 504h8v24h-8zM40 536h8v32h-8zM40 576h8v24h-8zM40 608h8v24h-8zM40 640h8v24h-8zM40 672h8v24h-8zM40 704h8v24h-8zM40 736h8v24h-8zM40 768h8v24h-8zM40 800h8v24h-8zM56 112h24v24h-24zM56 144h24v24h-24zM56 176h24v24h-24zM56 208h24v24h-24zM56 240h24v24h-24zM56 272h24v32h-24zM56 312h24v24h-24zM56 344h24v24h-24zM56 376h24v24h-24zM56 408h24v24h-24zM56 440h24v24h-24zM56 472h24v24h-24zM56 504h24v24h-24zM56 536h24v32h-24zM56 576h24v24h-24zM56 608h24v24h-24zM56 640h24v24h-24zM56 672h24v24h-24zM56 704h24v24h-24zM56 736h24v24h-24zM56 768h24v24h-24zM56 800h24v24h-24zM88 112h32v24h-32zM88 144h32v24h-32zM88 176h32v24h-32zM88 208h32v24h-32zM88 240h32v24h-32zM88 272h32v32h-32zM88 312h32v24h-32zM88 344h32v24h-32zM88 376h32v24h-32zM88 408h32v24h-32zM88 440h32v24h-32zM88 472h32v24h-32zM88 504h32v24h-32zM88 536h32v32h-32zM88 576h32v24h-32zM88 608h32v24h-32zM88 640h32v24h-32zM88 672h32v24h-32zM88 704h32v24h-32zM88 736h32v24h-32zM88 768h32v24h-32zM88 800h32v24h-32zM128 112h24v24h-24zM128 144h24v24h-24zM128 176h24v24h-24zM128 208h24v24h-24zM128 240h24v24h-24zM128 272h24v32h-24zM128 312h24v24h-24zM128 344h24v24h-24zM128 376h24v24h-24zM128 408h24v24h-24zM128 440h24v24h-24zM128 472h24v24h-24zM128 504h24v24h-24zM128 536h24v32h-24zM128 576h24v24h-24zM128 608h24v24h-24zM128 640h24v24h-24zM128 672h24v24h-24zM128 704h24v24h-24zM128 736h24v24h-24zM128 768h24v24h-24zM128 800h24v24h-24zM160 112h24v24h-24zM160 144h24v24h-24zM160 176h24v24h-24zM160 208h24v24h-24zM160 240h24v24h-24zM160 272h24v32h-24zM160 312h24v24h-24zM160 344h24v24h-24zM160 376h24v24h-24zM160 408h24v24h-24zM160 440h24v24h-24zM160 472h24v24h-24zM160 504h24v24h-24zM160 536h24v32h-24zM160 576h24v24h-24zM160 608h24v24h-24zM160 640h24v24h-24zM160 672h24v24h-24zM160 704h24v24h-24zM160 736h24v24h-24zM160 768h24v24h-24zM160 800h24v24h-24zM192 112h24v24h-24zM192 144h24v24h-24zM192 176h24v24h-24zM192 208h24v24h-24zM192 240h24v24h-24zM192 272h24v32h-24zM192 312h24v24h-24zM192 344h24v24h-24zM192 376h24v24h-24zM192 408h24v24h-24zM192 440h24v24h-24zM192 472h24v24h-24zM192 504h24v24h-24zM192 536h24v32h-24zM192 576h24v24h-24zM192 608h24v24h-24zM192 640h24v24h-24zM192 672h24v24h-24zM192 704h24v24h-24zM192 736h24v24h-24zM192 768h24v24h-24zM192 800h24v24h-24zM224 112h24v24h-24zM224 144h24v24h-24zM224 176h24v24h-24zM224 208h24v24h-24zM224 240h24v24h-24zM224 272h24v32h-24zM224 312h24v24h-24zM224 344h24v24h-24zM224 376h24v24h-24zM224 408h24v24h-24zM224 440h24v24h-24zM224 472h24v24h-24zM224 504h24v24h-24zM224 536h24v32h-24zM224 576h24v24h-24zM224 608h24v24h-24zM224 640h24v24h-24zM224 672h24v24h-24zM224 704h24v24h-24zM224 736h24v24h-24zM224 768h24v24h-24zM224 800h24v24h-24zM256 112h24v24h-24zM256 144h24v24h-24zM256 176h24v24h-24zM256 208h24v24h-24zM256 240h24v24h-24zM256 272h24v32h-24zM256 312h24v24h-24zM256 344h24v24h-24zM256 376h24v24h-24zM256 408h24v24h-24zM256 440h24v24h-24zM256 472h24v24h-24zM256 504h24v24h-24zM256 536h24v32h-24zM256 576h24v24h-24zM256 608h24v24h-24zM256 640h24v24h-24zM256 672h24v24h-24zM256 704h24v24h-24zM256 736h24v24h-24zM256 768h24v24h-24zM256 800h24v24h-24zM288 112h24v24h-24zM288 144h24v24h-24zM288 176h24v24h-24zM288 208h24v24h-24zM288 240h24v24h-24zM288 272h24v32h-24zM288 312h24v24h-24zM288 344h24v24h-24zM288 376h24v24h-24zM288 408h24v24h-24zM288 440h24v24h-24zM288 472h24v24h-24zM288 504h24v24h-24zM288 536h24v32h-24zM288 576h24v24h-24zM288 608h24v24h-24zM288 640h24v24h-24zM288 672h24v24h-24zM288 704h24v24h-24zM288 736h24v24h-24zM288 768h24v24h-24zM288 800h24v24h-24zM320 112h24v24h-24zM320 144h24v24h-24zM320 176h24v24h-24zM320 208h24v24h-24zM320 240h24v24h-24zM320 272h24v32h-24zM320 312h24v24h-24zM320 344h24v24h-24zM320 376h24v24h-24zM320 408h24v24h-24zM320 440h24v24h-24zM320 472h24v24h-24zM320 504h24v24h-24zM320 536h24v32h-24zM320 576h24v24h-24zM320 608h24v24h-24zM320 640h24v24h-24zM320 672h24v24h-24zM320 704h24v24h-24zM320 736h24v24h-24zM320 768h24v24h-24zM320 800h24v24h-24zM352 112h32v24h-32zM352 144h32v24h-32zM352 176h32v24h-32zM352 208h32v24h-32zM352 240h32v24h-32zM352 272h32v32h-32zM352 312h32v24h-32zM352 344h32v24h-32zM352 376h32v24h-32zM352 408h32v24h-32zM352 440h32v24h-32zM352 472h32v24h-32zM352 504h32v24h-32zM352 536h32v32h-32zM352 576h32v24h-32zM352 608h32v24h-32zM352 640h32v24h-32zM352 672h32v24h-32zM352 704h32v24h-32zM352 736h32v24h-32zM352 768h32v24h-32zM352 800h32v24h-32zM392 112h24v24h-24zM392 144h24v24h-24zM392 176h24v24h-24zM392 208h24v24h-24zM392 240h24v24h-24zM392 272h24v32h-24zM392 312h24v24h-24zM392 344h24v24h-24zM392 376h24v24h-24zM392 408h24v24h-24zM392 440h24v24h-24zM392 472h24v24h-24zM392 504h24v24h-24zM392 536h24v32h-24zM392 576h24v24h-24zM392 608h24v24h-24zM392 640h24v24h-24zM392 672h24v24h-24zM392 704h24v24h-24zM392 736h24v24h-24zM392 768h24v24h-24zM392 800h24v24h-24zM424 112h24v24h-24zM424 144h24v24h-24zM424 176h24v24h-24zM424 208h24v24h-24zM424 240h24v24h-24zM424 272h24v32h-24zM424 312h24v24h-24zM424 344h24v24h-24zM424 376h24v24h-24zM424 408h24v24h-24zM424 440h24v24h-24zM424 472h24v24h-24zM424 504h24v24h-24zM424 536h24v32h-24zM424 576h24v24h-24zM424 608h24v24h-24zM424 640h24v24h-24zM424 672h24v24h-24zM424 704h24v24h-24zM424 736h24v24h-24zM424 768h24v24h-24zM424 800h24v24h-24zM456 112h24v24h-24zM456 144h24v24h-24zM456 176h24v24h-24zM456 208h24v24h-24zM456 240h24v24h-24zM456 272h24v32h-24zM456 312h24v24h-24zM456 344h24v24h-24zM456 376h24v24h-24zM456 408h24v24h-24zM456 440h24v24h-24zM456 472h24v24h-24zM456 504h24v24h-24zM456 536h24v32h-24zM456 576h24v24h-24zM456 608h24v24h-24zM456 640h24v24h-24zM456 672h24v24h-24zM456 704h24v24h-24zM456 736h24v24h-24zM456 768h24v24h-24zM456 800h24v24h-24zM488 112h24v24h-24zM488 144h24v24h-24zM488 176h24v24h-24zM488 208h24v24h-24zM488 240h24v24h-24zM488 272h24v32h-24zM488 312h24v24h-24zM488 344h24v24h-24zM488 376h24v24h-24zM488 408h24v24h-24zM488 440h24v24h-24zM488 472h24v24h-24zM488 504h24v24h-24zM488 536h24v32h-24zM488 576h24v24h-24zM488 608h24v24h-24zM488 640h24v24h-24zM488 672h24v24h-24zM488 704h24v24h-24zM488 736h24v24h-24zM488 768h24v24h-24zM488 800h24v24h-24zM520 112h24v24h-24zM520 144h24v24h-24zM520 176h24v24h-24zM520 208h24v24h-24zM520 240h24v24h-24zM520 272h24v32h-24zM520 312h24v24h-24zM520 344h24v24h-24zM520 376h24v24h-24zM520 408h24v24h-24zM520 440h24v24h-24zM520 472h24v24h-24zM520 504h24v24h-24zM520 536h24v32h-24zM520 576h24v24h-24zM520 608h24v24h-24zM520 640h24v24h-24zM520 672h24v24h-24zM520 704h24v24h-24zM520 736h24v24h-24zM520 768h24v24h-24zM520 800h24v24h-24zM552 112h24v24h-24zM552 144h24v24h-24zM552 176h24v24h-24zM552 208h24v24h-24zM552 240h24v24h-24zM552 272h24v32h-24zM552 312h24v24h-24zM552 344h24v24h-24zM552 376h24v24h-24zM552 408h24v24h-24zM552 440h24v24h-24zM552 472h24v24h-24zM552 504h24v24h-24zM552 536h24v32h-24zM552 576h24v24h-24zM552 608h24v24h-24zM552 640h24v24h-24zM552 672h24v24h-24zM552 704h24v24h-24zM552 736h24v24h-24zM552 768h24v24h-24zM552 800h24v24h-24zM584 112h24v24h-24zM584 144h24v24h-24zM584 176h24v24h-24zM584 208h24v24h-24zM584 240h24v24h-24zM584 272h24v32h-24zM584 312h24v24h-24zM584 344h24v24h-24zM584 376h24v24h-24zM584 408h24v24h-24zM584 440h24v24h-24zM584 472h24v24h-24zM584 504h24v24h-24zM584 536h24v32h-24zM584 576h24v24h-24zM584 608h24v24h-24zM584 640h24v24h-24zM584 672h24v24h-24zM584 704h24v24h-24zM584 736h24v24h-24zM584 768h24v24h-24zM584 800h24v24h-24zM616 112h32v24h-32zM616 144h32v24h-32zM616 176h32v24h-32zM616 208h32v24h-32zM616 240h32v24h-32zM616 272h32v32h-32zM616 312h32v24h-32zM616 344h32v24h-32zM616 376h32v24h-32zM616 408h32v24h-32zM616 440h32v24h-32zM616 472h32v24h-32zM616 504h32v24h-32zM616 536h32v32h-32zM616 576h32v24h-32zM616 608h32v24h-32zM616 640h32v24h-32zM616 672h32v24h-32zM616 704h32v24h-32zM616 736h32v24h-32zM616 768h32v24h-32zM616 800h32v24h-32zM656 112h24v24h-24zM656 144h24v24h-24zM656 176h24v24h-24zM656 208h24v24h-24zM656 240h24v24h-24zM656 272h24v32h-24zM656 312h24v24h-24zM656 344h24v24h-24zM656 376h24v24h-24zM656 408h24v24h-24zM656 440h24v24h-24zM656 472h24v24h-24zM656 504h24v24h-24zM656 536h24v32h-24zM656 576h24v24h-24zM656 608h24v24h-24zM656 640h24v24h-24zM656 672h24v24h-24zM656 704h24v24h-24zM656 736h24v24h-24zM656 768h24v24h-24zM656 800h24v24h-24zM688 112h24v24h-24zM688 144h24v24h-24zM688 176h24v24h-24zM688 208h24v24h-24zM688 240h24v24h-24zM688 272h24v32h-24zM688 312h24v24h-24zM688 344h24v24h-24zM688 376h24v24h-24zM688 408h24v24h-24zM688 440h24v24h-24zM688 472h24v24h-24zM688 504h24v24h-24zM688 536h24v32h-24zM688 576h24v24h-24zM688 608h24v24h-24zM688 640h24v24h-24zM688 672h24v24h-24zM688 704h24v24h-24zM688 736h24v24h-24zM688 768h24v24h-24zM688 800h24v24h-24zM720 112h24v24h-24zM720 144h24v24h-24zM720 176h24v24h-24zM720 208h24v24h-24zM720 240h24v24h-24zM720 272h24v32h-24zM720 312h24v24h-24zM720 344h24v24h-24zM720 376h24v24h-24zM720 408h24v24h-24zM720 440h24v24h-24zM720 472h24v24h-24zM720 504h24v24h-24zM720 536h24v32h-24zM720 576h24v24h-24zM720 608h24v24h-24zM720 640h24v24h-24zM720 672h24v24h-24zM720 704h24v24h-24zM720 736h24v24h-24zM720 768h24v24h-24zM720 800h24v24h-24zM752 112h24v24h-24zM752 144h24v24h-24zM752 176h24v24h-24zM752 208h24v24h-24zM752 240h24v24h-24zM752 272h24v32h-24zM752 312h24v24h-24zM752 344h24v24h-24zM752 376h24v24h-24zM752 408h24v24h-24zM752 440h24v24h-24zM752 472h24v24h-24zM752 504h24v24h-24zM752 536h24v32h-24zM752 576h24v24h-24zM752 608h24v24h-24zM752 640h24v24h-24zM752 672h24v24h-24zM752 704h24v24h-24zM752 736h24v24h-24zM752 768h24v24h-24zM752 800h24v24h-24zM784 112h24v24h-24zM784 144h24v24h-24zM784 176h24v24h-24zM784 208h24v24h-24zM784 240h24v24h-24zM784 272h24v32h-24zM784 312h24v24h-24zM784 344h24v24h-24zM784 376h24v24h-24zM784 408h24v24h-24zM784 440h24v24h-24zM784 472h24v24h-24zM784 504h24v24h-24zM784 536h24v32h-24zM784 576h24v24h-24zM784 608h24v24h-24zM784 640h24v24h-24zM784 672h24v24h-24zM784 704h24v24h-24zM784 736h24v24h-24zM784 768h24v24h-24zM784 800h24v24h-24zM816 112h24v24h-24zM816 144h24v24h-24zM816 176h24v24h-24zM816 208h24v24h-24zM816 240h24v24h-24zM816 272h24v32h-24zM816 312h24v24h-24zM816 344h24v24h-24zM816 376h24v24h-24zM816 408h24v24h-24zM816 440h24v24h-24zM816 472h24v24h-24zM816 504h24v24h-24zM816 536h24v32h-24zM816 576h24v24h-24zM816 608h24v24h-24zM816 640h24v24h-24zM816 672h24v24h-24zM816 704h24v24h-24zM816 736h24v24h-24zM816 768h24v24h-24zM816 800h24v24h-24zM848 112h24v24h-24zM848 144h24v24h-24zM848 176h24v24h-24zM848 208h24v24h-24zM848 240h24v24h-24zM848 272h24v32h-24zM848 312h24v24h-24zM848 344h24v24h-24zM848 376h24v24h-24zM848 408h24v24h-24zM848 440h24v24h-24zM848 472h24v24h-24zM848 504h24v24h-24zM848 536h24v32h-24zM848 576h24v24h-24zM848 608h24v24h-24zM848 640h24v24h-24zM848 672h24v24h-24zM848 704h24v24h-24zM848 736h24v24h-24zM848 768h24v24h-24zM848 800h24v24h-24zM880 112h32v24h-32zM880 144h32v24h-32zM880 176h32v24h-32zM880 208h32v24h-32zM880 240h32v24h-32zM880 272h32v32h-32zM880 312h32v24h-32zM880 344h32v24h-32zM880 376h32v24h-32zM880 408h32v24h-32zM880 440h32v24h-32zM880 472h32v24h-32zM880 504h32v24h-32zM880 536h32v32h-32zM880 576h32v24h-32zM880 608h32v24h-32zM880 640h32v24h-32zM880 672h32v24h-32zM880 704h32v24h-32zM880 736h32v24h-32zM880 768h32v24h-32zM880 800h32v24h-32zM920 112h24v24h-24zM920 144h24v24h-24zM920 176h24v24h-24zM920 208h24v24h-24zM920 240h24v24h-24zM920 272h24v32h-24zM920 312h24v24h-24zM920 344h24v24h-24zM920 376h24v24h-24zM920 408h24v24h-24zM920 440h24v24h-24zM920 472h24v24h-24zM920 504h24v24h-24zM920 536h24v32h-24zM920 576h24v24h-24zM920 608h24v24h-24zM920 640h24v24h-24zM920 672h24v24h-24zM920 704h24v24h-24zM920 736h24v24h-24zM920 768h24v24h-24zM920 800h24v24h-24zM952 112h24v24h-24zM952 144h24v24h-24zM952 176h24v24h-24zM952 208h24v24h-24zM952 240h24v24h-24zM952 272h24v32h-24zM952 312h24v24h-24zM952 344h24v24h-24zM952 376h24v24h-24zM952 408h24v24h-24zM952 440h24v24h-24zM952 472h24v24h-24zM952 504h24v24h-24zM952 536h24v32h-24zM952 576h24v24h-24zM952 608h24v24h-24zM952 640h24v24h-24zM952 672h24v24h-24zM952 704h24v24h-24zM952 736h24v24h-24zM952 768h24v24h-24zM952 800h24v24h-24zM984 112h24v24h-24zM984 144h24v24h-24zM984 176h24v24h-24zM984 208h24v24h-24zM984 240h24v24h-24zM984 272h24v32h-24zM984 312h24v24h-24zM984 344h24v24h-24zM984 376h24v24h-24zM984 408h24v24h-24zM984 440h24v24h-24zM984 472h24v24h-24zM984 504h24v24h-24zM984 536h24v32h-24zM984 576h24v24h-24zM984 608h24v24h-24zM984 640h24v24h-24zM984 672h24v24h-24zM984 704h24v24h-24zM984 736h24v24h-24zM984 768h24v24h-24zM984 800h24v24h-24zM1016 112h24v24h-24zM1016 144h24v24h-24zM1016 176h24v24h-24zM1016 208h24v24h-24zM1016 240h24v24h-24zM1016 272h24v32h-24zM1016 312h24v24h-24zM1016 344h24v24h-24zM1016 376h24v24h-24zM1016 408h24v24h-24zM1016 440h24v24h-24zM1016 472h24v24h-24zM1016 504h24v24h-24zM1016 536h24v32h-24zM1016 576h24v24h-24zM1016 608h24v24h-24zM1016 640h24v24h-24zM1016 672h24v24h-24zM1016 704h24v24h-24zM1016 736h24v24h-24zM1016 768h24v24h-24zM1016 800h24v24h-24z" fill="url(#jt)"/><path d="M44.80 113.40H1039 M44.80 123.96H1039 M44.80 134.52H1039 M44.80 145.08H1039 M44.80 155.64H1039 M44.80 166.20H1039 M44.80 176.76H1039 M44.80 187.32H1039 M44.80 197.88H1039 M44.80 208.44H1039 M44.80 219.00H1039 M44.80 229.56H1039 M44.80 240.12H1039 M44.80 250.68H1039 M44.80 261.24H1039 M44.80 271.80H1039 M44.80 282.36H1039 M44.80 292.92H1039 M44.80 303.48H1039 M44.80 314.04H1039 M44.80 324.60H1039 M44.80 335.16H1039 M44.80 345.72H1039 M44.80 356.28H1039 M44.80 366.84H1039 M44.80 377.40H1039 M44.80 387.96H1039 M44.80 398.52H1039 M44.80 409.08H1039 M44.80 419.64H1039 M44.80 430.20H1039 M44.80 440.76H1039 M44.80 451.32H1039 M44.80 461.88H1039 M44.80 472.44H1039 M44.80 483.00H1039 M44.80 493.56H1039 M44.80 504.12H1039 M44.80 514.68H1039 M44.80 525.24H1039 M44.80 535.80H1039 M44.80 546.36H1039 M44.80 556.92H1039 M44.80 567.48H1039 M44.80 578.04H1039 M44.80 588.60H1039 M44.80 599.16H1039 M44.80 609.72H1039 M44.80 620.28H1039 M44.80 630.84H1039 M44.80 641.40H1039 M44.80 651.96H1039 M44.80 662.52H1039 M44.80 673.08H1039 M44.80 683.64H1039 M44.80 694.20H1039 M44.80 704.76H1039 M44.80 715.32H1039 M44.80 725.88H1039 M44.80 736.44H1039 M44.80 747.00H1039 M44.80 757.56H1039 M44.80 768.12H1039 M44.80 778.68H1039 M44.80 789.24H1039 M44.80 799.80H1039 M44.80 810.36H1039 M44.80 820.92H1039" stroke="#d0d0d0" stroke-width="1.4" stroke-dasharray="1.4 9.160" fill="none"/><g fill="#940c14"><rect x="322.44" y="266" width="5.8" height="44" rx="2.9"/><rect x="322.44" y="675" width="5.8" height="45" rx="2.9"/><rect x="333.00" y="266" width="5.8" height="44" rx="2.9"/><rect x="333.00" y="675" width="5.8" height="45" rx="2.9"/><rect x="343.56" y="266" width="5.8" height="44" rx="2.9"/><rect x="343.56" y="675" width="5.8" height="45" rx="2.9"/><rect x="354.12" y="266" width="5.8" height="44" rx="2.9"/><rect x="354.12" y="675" width="5.8" height="45" rx="2.9"/><rect x="364.68" y="266" width="5.8" height="44" rx="2.9"/><rect x="364.68" y="675" width="5.8" height="45" rx="2.9"/><rect x="375.24" y="266" width="5.8" height="44" rx="2.9"/><rect x="375.24" y="675" width="5.8" height="45" rx="2.9"/><rect x="385.80" y="266" width="5.8" height="44" rx="2.9"/><rect x="385.80" y="675" width="5.8" height="45" rx="2.9"/><rect x="396.36" y="266" width="5.8" height="44" rx="2.9"/><rect x="396.36" y="675" width="5.8" height="45" rx="2.9"/><rect x="406.92" y="266" width="5.8" height="44" rx="2.9"/><rect x="406.92" y="675" width="5.8" height="45" rx="2.9"/><rect x="417.48" y="266" width="5.8" height="44" rx="2.9"/><rect x="417.48" y="675" width="5.8" height="45" rx="2.9"/><rect x="428.04" y="266" width="5.8" height="44" rx="2.9"/><rect x="428.04" y="675" width="5.8" height="45" rx="2.9"/><rect x="438.60" y="266" width="5.8" height="44" rx="2.9"/><rect x="438.60" y="675" width="5.8" height="45" rx="2.9"/><rect x="449.16" y="266" width="5.8" height="44" rx="2.9"/><rect x="449.16" y="675" width="5.8" height="45" rx="2.9"/><rect x="459.72" y="266" width="5.8" height="44" rx="2.9"/><rect x="459.72" y="675" width="5.8" height="45" rx="2.9"/><rect x="470.28" y="266" width="5.8" height="44" rx="2.9"/><rect x="470.28" y="675" width="5.8" height="45" rx="2.9"/><rect x="480.84" y="266" width="5.8" height="44" rx="2.9"/><rect x="480.84" y="675" width="5.8" height="45" rx="2.9"/><rect x="491.40" y="266" width="5.8" height="44" rx="2.9"/><rect x="491.40" y="675" width="5.8" height="45" rx="2.9"/><rect x="501.96" y="266" width="5.8" height="44" rx="2.9"/><rect x="501.96" y="675" width="5.8" height="45" rx="2.9"/><rect x="512.52" y="266" width="5.8" height="44" rx="2.9"/><rect x="512.52" y="675" width="5.8" height="45" rx="2.9"/><rect x="523.08" y="266" width="5.8" height="44" rx="2.9"/><rect x="523.08" y="675" width="5.8" height="45" rx="2.9"/><rect x="533.64" y="266" width="5.8" height="44" rx="2.9"/><rect x="533.64" y="675" width="5.8" height="45" rx="2.9"/><rect x="544.20" y="266" width="5.8" height="44" rx="2.9"/><rect x="544.20" y="675" width="5.8" height="45" rx="2.9"/><rect x="554.76" y="266" width="5.8" height="44" rx="2.9"/><rect x="554.76" y="675" width="5.8" height="45" rx="2.9"/><rect x="565.32" y="266" width="5.8" height="44" rx="2.9"/><rect x="565.32" y="675" width="5.8" height="45" rx="2.9"/><rect x="575.88" y="266" width="5.8" height="44" rx="2.9"/><rect x="575.88" y="675" width="5.8" height="45" rx="2.9"/><rect x="586.44" y="266" width="5.8" height="44" rx="2.9"/><rect x="586.44" y="675" width="5.8" height="45" rx="2.9"/><rect x="597.00" y="266" width="5.8" height="44" rx="2.9"/><rect x="597.00" y="675" width="5.8" height="45" rx="2.9"/><rect x="607.56" y="266" width="5.8" height="44" rx="2.9"/><rect x="607.56" y="675" width="5.8" height="45" rx="2.9"/><rect x="618.12" y="266" width="5.8" height="44" rx="2.9"/><rect x="618.12" y="675" width="5.8" height="45" rx="2.9"/><rect x="628.68" y="266" width="5.8" height="44" rx="2.9"/><rect x="628.68" y="675" width="5.8" height="45" rx="2.9"/><rect x="639.24" y="266" width="5.8" height="44" rx="2.9"/><rect x="639.24" y="675" width="5.8" height="45" rx="2.9"/><rect x="649.80" y="266" width="5.8" height="44" rx="2.9"/><rect x="649.80" y="675" width="5.8" height="45" rx="2.9"/><rect x="259.5" y="327.08" width="45" height="5.6" rx="2.8"/><rect x="671" y="327.08" width="43.5" height="5.6" rx="2.8"/><rect x="259.5" y="337.64" width="45" height="5.6" rx="2.8"/><rect x="671" y="337.64" width="43.5" height="5.6" rx="2.8"/><rect x="259.5" y="348.20" width="45" height="5.6" rx="2.8"/><rect x="671" y="348.20" width="43.5" height="5.6" rx="2.8"/><rect x="259.5" y="358.76" width="45" height="5.6" rx="2.8"/><rect x="671" y="358.76" width="43.5" height="5.6" rx="2.8"/><rect x="259.5" y="369.32" width="45" height="5.6" rx="2.8"/><rect x="671" y="369.32" width="43.5" height="5.6" rx="2.8"/><rect x="259.5" y="379.88" width="45" height="5.6" rx="2.8"/><rect x="671" y="379.88" width="43.5" height="5.6" rx="2.8"/><rect x="259.5" y="390.44" width="45" height="5.6" rx="2.8"/><rect x="671" y="390.44" width="43.5" height="5.6" rx="2.8"/><rect x="259.5" y="401.00" width="45" height="5.6" rx="2.8"/><rect x="671" y="401.00" width="43.5" height="5.6" rx="2.8"/><rect x="259.5" y="411.56" width="45" height="5.6" rx="2.8"/><rect x="671" y="411.56" width="43.5" height="5.6" rx="2.8"/><rect x="259.5" y="422.12" width="45" height="5.6" rx="2.8"/><rect x="671" y="422.12" width="43.5" height="5.6" rx="2.8"/><rect x="259.5" y="432.68" width="45" height="5.6" rx="2.8"/><rect x="671" y="432.68" width="43.5" height="5.6" rx="2.8"/><rect x="259.5" y="443.24" width="45" height="5.6" rx="2.8"/><rect x="671" y="443.24" width="43.5" height="5.6" rx="2.8"/><rect x="259.5" y="453.80" width="45" height="5.6" rx="2.8"/><rect x="671" y="453.80" width="43.5" height="5.6" rx="2.8"/><rect x="259.5" y="464.36" width="45" height="5.6" rx="2.8"/><rect x="671" y="464.36" width="43.5" height="5.6" rx="2.8"/><rect x="259.5" y="474.92" width="45" height="5.6" rx="2.8"/><rect x="671" y="474.92" width="43.5" height="5.6" rx="2.8"/><rect x="259.5" y="485.48" width="45" height="5.6" rx="2.8"/><rect x="671" y="485.48" width="43.5" height="5.6" rx="2.8"/><rect x="259.5" y="496.04" width="45" height="5.6" rx="2.8"/><rect x="671" y="496.04" width="43.5" height="5.6" rx="2.8"/><rect x="259.5" y="506.60" width="45" height="5.6" rx="2.8"/><rect x="671" y="506.60" width="43.5" height="5.6" rx="2.8"/><rect x="259.5" y="517.16" width="45" height="5.6" rx="2.8"/><rect x="671" y="517.16" width="43.5" height="5.6" rx="2.8"/><rect x="259.5" y="527.72" width="45" height="5.6" rx="2.8"/><rect x="671" y="527.72" width="43.5" height="5.6" rx="2.8"/><rect x="259.5" y="538.28" width="45" height="5.6" rx="2.8"/><rect x="671" y="538.28" width="43.5" height="5.6" rx="2.8"/><rect x="259.5" y="548.84" width="45" height="5.6" rx="2.8"/><rect x="671" y="548.84" width="43.5" height="5.6" rx="2.8"/><rect x="259.5" y="559.40" width="45" height="5.6" rx="2.8"/><rect x="671" y="559.40" width="43.5" height="5.6" rx="2.8"/><rect x="259.5" y="569.96" width="45" height="5.6" rx="2.8"/><rect x="671" y="569.96" width="43.5" height="5.6" rx="2.8"/><rect x="259.5" y="580.52" width="45" height="5.6" rx="2.8"/><rect x="671" y="580.52" width="43.5" height="5.6" rx="2.8"/><rect x="259.5" y="591.08" width="45" height="5.6" rx="2.8"/><rect x="671" y="591.08" width="43.5" height="5.6" rx="2.8"/><rect x="259.5" y="601.64" width="45" height="5.6" rx="2.8"/><rect x="671" y="601.64" width="43.5" height="5.6" rx="2.8"/><rect x="259.5" y="612.20" width="45" height="5.6" rx="2.8"/><rect x="671" y="612.20" width="43.5" height="5.6" rx="2.8"/><rect x="259.5" y="622.76" width="45" height="5.6" rx="2.8"/><rect x="671" y="622.76" width="43.5" height="5.6" rx="2.8"/><rect x="259.5" y="633.32" width="45" height="5.6" rx="2.8"/><rect x="671" y="633.32" width="43.5" height="5.6" rx="2.8"/><rect x="259.5" y="643.88" width="45" height="5.6" rx="2.8"/><rect x="671" y="643.88" width="43.5" height="5.6" rx="2.8"/><rect x="259.5" y="654.44" width="45" height="5.6" rx="2.8"/><rect x="671" y="654.44" width="43.5" height="5.6" rx="2.8"/></g><rect x="315.6" y="321" width="344.7" height="344.6" fill="none" stroke="#a4a424" stroke-width="4.6"/><circle cx="336.7" cy="341.6" r="10" fill="#d8d820"/><g stroke="#b8c8a8" stroke-width="1" fill="none"><circle cx="487.5" cy="493" r="8.6"/><path d="M487.5 477V510M471 493H504"/></g><rect x="284" y="312" width="2" height="2" fill="#c8c890"/><rect x="248" y="330" width="2" height="2" fill="#a0a090"/><rect x="248" y="425" width="2" height="2" fill="#909080"/><rect x="248" y="530" width="2" height="2" fill="#909080"/><rect x="248" y="635" width="2" height="2" fill="#909080"/><rect x="398" y="733" width="2" height="2" fill="#909080"/><rect x="504" y="733" width="2" height="2" fill="#909080"/><rect x="610" y="733" width="2" height="2" fill="#909080"/><rect x="725" y="448" width="2" height="2" fill="#808080"/><rect x="725" y="545" width="2" height="2" fill="#808080"/><g fill="none" stroke="#2258c0" stroke-width="2.2"><path d="M596 489.5H623L633 499.5H658"/><path d="M606 497.5H618L628 507.5H672L677 502"/></g><rect x="587.9" y="485.2" width="9" height="9" rx="2" fill="#e0a050"/><rect x="591.4" y="488.7" width="2" height="2" fill="#402010"/><rect x="597.9" y="492.9" width="9" height="9" rx="2" fill="#e0a050"/><rect x="601.4" y="496.4" width="2" height="2" fill="#402010"/><rect x="657.0" y="495.0" width="9" height="9" rx="2" fill="#e0a050"/><rect x="660.5" y="498.5" width="2" height="2" fill="#402010"/><rect x="673.0" y="495.0" width="9" height="9" rx="2" fill="#e0a050"/><rect x="676.5" y="498.5" width="2" height="2" fill="#402010"/><text x="582.5" y="539.5" font-family="Liberation Sans" font-size="29.5" fill="#1f4c9c" stroke="#4f8fdc" stroke-width="1.3" letter-spacing="-.2">EDA365</text></svg>
<div class="a" style="left:1258px;top:133px;width:19px;height:23px;background:#f2f2f0;border-top:1px solid #808080;border-left:1px solid #808080;border-right:1px solid #c8c8c4"></div>
<div class="t" style="left:1275px;top:136px;font-size:11px;transform-origin:0 0;transform:rotate(90deg);color:#000">Vis</div>
<div class="a" style="left:36px;top:835px;width:968px;height:165px;background:#d4d0c8;border-top:1px solid #404040;border-left:1px solid #404040;border-right:1px solid #fff;border-bottom:1px solid #fff"></div>
<div class="a" style="left:37px;top:836px;width:16px;height:163px;background:linear-gradient(90deg,#e4e4f4 0%,#f0f0f8 40%,#c8c8d0 100%)"></div>
<svg class="a" style="left:38px;top:838px" width="14" height="40" viewBox="0 0 14 40"><path d="M3 3 l6 6 M9 3 l-6 6" stroke="#000" stroke-width="1.6"/><path d="M8 16 v6 l-4 -3z" fill="#000"/><path d="M4 32 h7 M7.5 28 v8 M5.5 28 h4" stroke="#000" stroke-width="1.2"/></svg>
<div class="t" style="left:38px;top:994px;font-size:11px;transform-origin:0 0;transform:rotate(-90deg);color:#000">Command</div>
<div class="a" style="left:40px;top:993px;width:3px;height:3px;background:#1a2a80"></div><div class="a" style="left:46px;top:993px;width:3px;height:3px;background:#1a2a80"></div>
<div class="a" style="left:53px;top:835px;width:933px;height:160px;background:#fff;border-top:1px solid #000;border-left:1px solid #000;border-bottom:1px solid #000"></div>
<div class="t" style="left:56px;top:839px;font-size:11px;letter-spacing:-0.15px">E- (SPMHA1-441): Text not found.</div>
<div class="t" style="left:56px;top:852px;font-size:11px;letter-spacing:-0.15px">last pick:&nbsp; 2.900&nbsp; 0.300</div>
<div class="t" style="left:56px;top:865px;font-size:11px;letter-spacing:-0.15px">E- (SPMHA1-441): Text not found.</div>
<div class="t" style="left:56px;top:878px;font-size:11px;letter-spacing:-0.15px">last pick:&nbsp; 2.900&nbsp; 0.300</div>
<div class="t" style="left:56px;top:891px;font-size:11px;letter-spacing:-0.15px">E- (SPMHA1-441): Text not found.</div>
<div class="t" style="left:56px;top:904px;font-size:11px;letter-spacing:-0.15px">last pick:&nbsp; 1.200&nbsp; -1.200</div>
<div class="t" style="left:56px;top:917px;font-size:11px;letter-spacing:-0.15px">E- (SPMHA1-441): Text not found.</div>
<div class="t" style="left:56px;top:930px;font-size:11px;letter-spacing:-0.15px">Select element(s) to move.</div>
<div class="t" style="left:56px;top:943px;font-size:11px;letter-spacing:-0.15px">Pick text location.</div>
<div class="t" style="left:56px;top:956px;font-size:11px;letter-spacing:-0.15px">last pick:&nbsp; 0.000&nbsp; -4.500</div>
<div class="t" style="left:56px;top:969px;font-size:11px;letter-spacing:-0.15px">Refdes of this subclass is already defined, change subclass.</div>
<div class="t" style="left:56px;top:982px;font-size:11px;letter-spacing:-0.15px">Command &gt;</div>
<div class="a" style="left:986px;top:848px;width:16px;height:146px;background-color:#e8e6e0;background-image:repeating-conic-gradient(#fff 0 25%,#d4d0c8 0 50%);background-size:2px 2px"></div>
<div class="btn" style="left:986px;top:962px;width:16px;height:16px"></div>
<div class="btn" style="left:986px;top:978px;width:16px;height:16px"></div>
<svg class="a" style="left:990px;top:984px" width="9" height="6" viewBox="0 0 9 6"><path d="M0 1 H8 L4 5z" fill="#000"/></svg>
<div class="a" style="left:1007px;top:847px;width:242px;height:153px;background:#d4d0c8;border-top:1px solid #808080;border-left:1px solid #808080;border-right:1px solid #fff;border-bottom:1px solid #fff"></div>
<div class="a" style="left:1008px;top:848px;width:19px;height:151px;background:linear-gradient(90deg,#d0d0e0 0%,#f0f0f8 50%,#d0d0d8 100%)"></div>
<svg class="a" style="left:1011px;top:851px" width="12" height="30" viewBox="0 0 12 30"><path d="M8 3 v6 l-4 -3z" fill="#000"/><path d="M3 22 h7 M6.5 18 v8 M4.5 18 h4" stroke="#000" stroke-width="1.2"/></svg>
<div class="t" style="left:1011px;top:990px;font-size:11px;transform-origin:0 0;transform:rotate(-90deg);color:#000">WorldView</div>
<div class="a" style="left:1011px;top:993px;width:3px;height:3px;background:#1a2a80"></div><div class="a" style="left:1017px;top:993px;width:3px;height:3px;background:#1a2a80"></div>
<div class="a" style="left:1027px;top:848px;width:220px;height:150px;background:#000"></div>
<div class="a" style="left:1121px;top:964px;width:146px;height:26px;background:linear-gradient(180deg,#ffffff 0%,#eef2f8 60%,#dde4ee 100%);border:1px solid #b8c4d4;box-shadow:1px 1px 2px rgba(0,0,0,.4)"></div>
<svg class="a" style="left:1124px;top:966px" width="26" height="24" viewBox="0 0 26 24"><circle cx="13" cy="12" r="10" fill="#3a6ab0"/><circle cx="10" cy="10" r="6" fill="#7aa8e0" opacity=".6"/><path d="M7 8 h5 M9.5 6 v10 M7 12 l2 -2 M12 12 l-2 -2 M13 7 v9 M13 10 h4 M15 10 v6" stroke="#fff" stroke-width="1.3" fill="none"/><circle cx="20" cy="17" r="4" fill="#c03030"/><circle cx="19" cy="19" r="3" fill="#f0c030"/></svg>
<svg class="a" style="left:1157px;top:967px" width="20" height="20" viewBox="0 0 20 20"><rect x="3" y="6" width="13" height="7" fill="none" stroke="#3a6ac0" stroke-width="2.4"/><path d="M9.5 2 v17" stroke="#3a6ac0" stroke-width="2.6"/></svg>
<svg class="a" style="left:1177px;top:967px" width="20" height="20" viewBox="0 0 20 20"><path d="M12 2 a8 8 0 1 1 -9 12 a6 6 0 0 0 9 -12z" fill="#3a6ac0"/></svg>
<svg class="a" style="left:1196px;top:968px" width="14" height="18" viewBox="0 0 14 18"><circle cx="6" cy="5" r="2" fill="#2a6ad0"/><path d="M6 9 a3 3 0 0 1 0 6" stroke="#2a6ad0" stroke-width="2" fill="none"/></svg>
<svg class="a" style="left:1212px;top:968px" width="26" height="18" viewBox="0 0 26 18"><rect x="1" y="3" width="22" height="12" rx="2" fill="#2a6ad0"/><path d="M4 6 h16 M4 9 h16 M6 12 h12" stroke="#fff" stroke-width="1" stroke-dasharray="2 1"/></svg>
<svg class="a" style="left:1238px;top:967px" width="20" height="20" viewBox="0 0 20 20"><circle cx="10" cy="10" r="5.5" fill="none" stroke="#2a6ad0" stroke-width="3.5"/><path d="M10 1 v4 M10 15 v4 M1 10 h4 M15 10 h4 M3.5 3.5 l3 3 M13.5 13.5 l3 3 M3.5 16.5 l3 -3 M13.5 6.5 l3 -3" stroke="#2a6ad0" stroke-width="2.5"/></svg>
<div class="a" style="left:0;top:1002px;width:1280px;height:22px;background:#d4d0c8;border-top:1px solid #fff"></div>
<div class="a" style="left:0px;top:1004px;width:512px;height:20px;border-top:1px solid #808080;border-left:1px solid #808080;border-right:1px solid #fff"></div>
<div class="t" style="left:2px;top:1009px;font-size:11px;color:#000">label refdes</div>
<div class="a" style="left:514px;top:1004px;width:58px;height:20px;background:#00ee00;border:1px solid #a0a0a0"></div>
<div class="a" style="left:574px;top:1004px;width:135px;height:20px;border-top:1px solid #808080;border-left:1px solid #808080;border-right:1px solid #fff"></div>
<div class="a" style="left:711px;top:1004px;width:137px;height:20px;border-top:1px solid #808080;border-left:1px solid #808080;border-right:1px solid #fff"></div>
<div class="a" style="left:849px;top:1004px;width:104px;height:20px;border-top:1px solid #808080;border-left:1px solid #808080;border-right:1px solid #fff"></div>
<div class="t" style="left:851px;top:1009px;font-size:11px;color:#000">23.300, 14.300</div>
<div class="btn" style="left:957px;top:1006px;width:17px;height:16px;font-weight:bold;font-size:12px;line-height:14px;border:1px solid #404040;box-shadow:inset 1px 1px 0 #fff, inset -1px -1px 0 #808080">P</div>
<div class="btn" style="left:983px;top:1006px;width:17px;height:16px;font-weight:bold;font-size:12px;line-height:14px;border:1px solid #404040;box-shadow:inset 1px 1px 0 #fff, inset -1px -1px 0 #808080">A</div>
<div class="a" style="left:1005px;top:1004px;width:107px;height:20px;border-top:1px solid #808080;border-left:1px solid #808080;border-right:1px solid #fff"></div>
<div class="a" style="left:1113px;top:1004px;width:49px;height:20px;border-top:1px solid #808080;border-left:1px solid #808080;border-right:1px solid #fff"></div>
<div class="a" style="left:1163px;top:1004px;width:31px;height:20px;border-top:1px solid #808080;border-left:1px solid #808080;border-right:1px solid #fff"></div>
<div class="t" style="left:1165px;top:1009px;font-size:11px;color:#000">EE</div>
<div class="a" style="left:1195px;top:1004px;width:28px;height:20px;border-top:1px solid #808080;border-left:1px solid #808080;border-right:1px solid #fff"></div>
<div class="a" style="left:1224px;top:1004px;width:38px;height:20px;background:#00ee00;border-top:1px solid #808080"></div>
<div class="t" style="left:1233px;top:1009px;font-size:11px;color:#404040">DRC</div>
<div class="a" style="left:1263px;top:1004px;width:17px;height:20px;border-top:1px solid #808080;border-left:1px solid #808080;border-right:1px solid #fff"></div>
<div class="a" style="left:740px;top:156px;width:560px;height:692px;background:#d4d0c8;border-top:1px solid #f0eee8;border-left:2px solid #f4f2ee;border-bottom:1px solid #404040"></div>
<div class="a" style="left:742px;top:846px;width:538px;height:1px;background:#808080"></div>
<div class="a" style="left:744px;top:159px;width:536px;height:18px;background:linear-gradient(90deg,#808080 0%,#8a8a8a 30%,#b8b8b8 100%)"></div>
<div class="t" style="left:746px;top:162px;color:#f4f4f4;font-weight:bold;font-size:11px">Color Dialog</div>
<div class="t" style="left:750px;top:182px;color:#7a7a7a;font-size:11px;text-shadow:1px 1px 0 #fff"><u>F</u>ile</div>
<div class="a" style="left:745px;top:197px;width:540px;height:648px;border-top:2px solid #606060;border-left:2px solid #606060;border-bottom:1px solid #fff"></div>
<div class="a" style="left:747px;top:199px;width:533px;height:1px;background:#fff"></div>
<svg class="a" style="left:758px;top:207px" width="12" height="12" viewBox="0 0 12 12"><path d="M10.2 1.8 A5.9 5.9 0 0 0 1.8 10.2" stroke="#808080" fill="none"/><path d="M9.5 2.5 A4.9 4.9 0 0 0 2.5 9.5" stroke="#404040" fill="none"/><path d="M1.8 10.2 A5.9 5.9 0 0 0 10.2 1.8" stroke="#fff" fill="none"/><circle cx="6" cy="6" r="4" fill="#fff"/><circle cx="6" cy="6" r="2" fill="#000"/></svg>
<svg class="a" style="left:848px;top:207px" width="12" height="12" viewBox="0 0 12 12"><path d="M10.2 1.8 A5.9 5.9 0 0 0 1.8 10.2" stroke="#808080" fill="none"/><path d="M9.5 2.5 A4.9 4.9 0 0 0 2.5 9.5" stroke="#404040" fill="none"/><path d="M1.8 10.2 A5.9 5.9 0 0 0 10.2 1.8" stroke="#fff" fill="none"/><circle cx="6" cy="6" r="4" fill="#fff"/></svg>
<div class="t" style="left:775px;top:208px;font-size:11px">Layers</div>
<div class="t" style="left:865px;top:208px;font-size:11px">Nets</div>
<div class="t" style="left:1195px;top:208px;font-size:11px">Global visibility:</div>
<div class="a" style="left:761px;top:228px;width:142px;height:364px;background:#fff;border-top:1px solid #808080;border-left:1px solid #808080;border-right:1px solid #fff;border-bottom:1px solid #fff;box-shadow:inset 1px 1px 0 #404040, inset -1px -1px 0 #d4d0c8"></div>
<svg class="a" style="left:761px;top:228px" width="142" height="290" viewBox="761 228 142 290"><g stroke="#a0a0a0" stroke-width="1" stroke-dasharray="1 1" fill="none"><path d="M770.5 229V493.5"/><path d="M790.5 277V301.5"/><path d="M790.5 373V445.5"/><path d="M770.5 237.5H782"/><path d="M770.5 253.5H782"/><path d="M770.5 269.5H782"/><path d="M790.5 285.5H802"/><path d="M790.5 301.5H802"/><path d="M770.5 317.5H782"/><path d="M770.5 333.5H782"/><path d="M770.5 349.5H782"/><path d="M770.5 365.5H782"/><path d="M790.5 381.5H802"/><path d="M790.5 397.5H802"/><path d="M790.5 413.5H802"/><path d="M790.5 429.5H802"/><path d="M790.5 445.5H802"/><path d="M770.5 461.5H782"/><path d="M770.5 477.5H782"/><path d="M770.5 493.5H782"/></g><path d="M783.5 230.5 h5 l3 3 h5 v9 h-13z" fill="#e8ec78" stroke="#000"/><path d="M784 242 h13 M797 234 v8" stroke="#000" stroke-width="1.5"/><path d="M783.5 246.5 h5 l3 3 h5 v9 h-13z" fill="#e8ec78" stroke="#000"/><path d="M784 258 h13 M797 250 v8" stroke="#000" stroke-width="1.5"/><path d="M783.5 262.5 h5 l3 3 h5 v8 h-13z" fill="#e8ec78" stroke="#000"/><path d="M783.5 273.5 l3 -6 h11 l-3 6z" fill="#e8ec78" stroke="#000"/><path d="M784 274 h13" stroke="#000" stroke-width="1.5"/><rect x="766.5" y="265.5" width="8" height="8" fill="#fff" stroke="#909090"/><path d="M768 269.5h5" stroke="#000"/><path d="M803.5 278.5 h5 l3 3 h5 v9 h-13z" fill="#e8ec78" stroke="#000"/><path d="M804 290 h13 M817 282 v8" stroke="#000" stroke-width="1.5"/><rect x="786.5" y="281.5" width="8" height="8" fill="#fff" stroke="#909090"/><path d="M788 285.5h5" stroke="#000"/><path d="M790.5 283v5" stroke="#000"/><path d="M803.5 294.5 h5 l3 3 h5 v9 h-13z" fill="#e8ec78" stroke="#000"/><path d="M804 306 h13 M817 298 v8" stroke="#000" stroke-width="1.5"/><rect x="786.5" y="297.5" width="8" height="8" fill="#fff" stroke="#909090"/><path d="M788 301.5h5" stroke="#000"/><path d="M790.5 299v5" stroke="#000"/><path d="M783.5 310.5 h5 l3 3 h5 v9 h-13z" fill="#e8ec78" stroke="#000"/><path d="M784 322 h13 M797 314 v8" stroke="#000" stroke-width="1.5"/><rect x="766.5" y="313.5" width="8" height="8" fill="#fff" stroke="#909090"/><path d="M768 317.5h5" stroke="#000"/><path d="M770.5 315v5" stroke="#000"/><path d="M783.5 326.5 h5 l3 3 h5 v9 h-13z" fill="#e8ec78" stroke="#000"/><path d="M784 338 h13 M797 330 v8" stroke="#000" stroke-width="1.5"/><path d="M783.5 342.5 h5 l3 3 h5 v9 h-13z" fill="#e8ec78" stroke="#000"/><path d="M784 354 h13 M797 346 v8" stroke="#000" stroke-width="1.5"/><path d="M783.5 358.5 h5 l3 3 h5 v8 h-13z" fill="#e8ec78" stroke="#000"/><path d="M783.5 369.5 l3 -6 h11 l-3 6z" fill="#e8ec78" stroke="#000"/><path d="M784 370 h13" stroke="#000" stroke-width="1.5"/><rect x="766.5" y="361.5" width="8" height="8" fill="#fff" stroke="#909090"/><path d="M768 365.5h5" stroke="#000"/><path d="M803.5 374.5 h5 l3 3 h5 v9 h-13z" fill="#e8ec78" stroke="#000"/><path d="M804 386 h13 M817 378 v8" stroke="#000" stroke-width="1.5"/><path d="M803.5 390.5 h5 l3 3 h5 v9 h-13z" fill="#e8ec78" stroke="#000"/><path d="M804 402 h13 M817 394 v8" stroke="#000" stroke-width="1.5"/><path d="M803.5 406.5 h5 l3 3 h5 v9 h-13z" fill="#e8ec78" stroke="#000"/><path d="M804 418 h13 M817 410 v8" stroke="#000" stroke-width="1.5"/><path d="M803.5 422.5 h5 l3 3 h5 v9 h-13z" fill="#e8ec78" stroke="#000"/><path d="M804 434 h13 M817 426 v8" stroke="#000" stroke-width="1.5"/><path d="M803.5 438.5 h5 l3 3 h5 v9 h-13z" fill="#e8ec78" stroke="#000"/><path d="M804 450 h13 M817 442 v8" stroke="#000" stroke-width="1.5"/><path d="M783.5 454.5 h5 l3 3 h5 v9 h-13z" fill="#e8ec78" stroke="#000"/><path d="M784 466 h13 M797 458 v8" stroke="#000" stroke-width="1.5"/><path d="M783.5 470.5 h5 l3 3 h5 v9 h-13z" fill="#e8ec78" stroke="#000"/><path d="M784 482 h13 M797 474 v8" stroke="#000" stroke-width="1.5"/><path d="M783.5 486.5 h5 l3 3 h5 v9 h-13z" fill="#e8ec78" stroke="#000"/><path d="M784 498 h13 M797 490 v8" stroke="#000" stroke-width="1.5"/></svg>
<div class="a" style="left:801px;top:357px;width:66px;height:15px;background:#d4d0c8"></div>
<div class="mono" style="left:804px;top:232px">My Favorites</div>
<div class="mono" style="left:804px;top:248px">Display</div>
<div class="mono" style="left:804px;top:264px">Stack-Up</div>
<div class="mono" style="left:824px;top:280px">Conductor</div>
<div class="mono" style="left:824px;top:296px">Non-Condu...</div>
<div class="mono" style="left:804px;top:312px">Areas</div>
<div class="mono" style="left:804px;top:328px">Board Geometry</div>
<div class="mono" style="left:804px;top:344px">Package Geom...</div>
<div class="mono" style="left:804px;top:360px">Components</div>
<div class="mono" style="left:824px;top:376px">Component V..</div>
<div class="mono" style="left:824px;top:392px">Device Type</div>
<div class="mono" style="left:824px;top:408px">Ref Des</div>
<div class="mono" style="left:824px;top:424px">Tolerance</div>
<div class="mono" style="left:824px;top:440px">User Part Nu.</div>
<div class="mono" style="left:804px;top:456px">Manufacturing</div>
<div class="mono" style="left:804px;top:472px">Drawing Format</div>
<div class="mono" style="left:804px;top:488px">Analysis</div>
<div class="a" style="left:762px;top:575px;width:140px;height:16px;background-color:#e8e6e0;background-image:repeating-conic-gradient(#fff 0 25%,#d4d0c8 0 50%);background-size:2px 2px"></div>
<div class="btn" style="left:762px;top:575px;width:16px;height:16px"></div>
<svg class="a" style="left:767px;top:579px" width="6" height="8" viewBox="0 0 6 8"><path d="M5 0 V8 L1 4z" fill="#000"/></svg>
<div class="btn" style="left:778px;top:575px;width:93px;height:16px"></div>
<div class="btn" style="left:886px;top:575px;width:16px;height:16px"></div>
<svg class="a" style="left:892px;top:579px" width="6" height="8" viewBox="0 0 6 8"><path d="M1 0 V8 L5 4z" fill="#000"/></svg>
<div class="a" style="left:907px;top:227px;width:380px;height:365px;background:#d4d0c8;border-top:2px solid #404040;border-left:2px solid #404040;border-bottom:1px solid #fff"></div>
<svg class="a" style="left:0;top:0" width="1280" height="600" viewBox="0 0 1280 600"><rect x="910" y="229" width="119" height="18" fill="#d4d0c8"/><rect x="1029" y="229" width="260" height="18" fill="#fff"/><rect x="910" y="247" width="370" height="126" fill="#fff"/><path d="M910 247.5H1280" stroke="#a0a0a0" stroke-width="1"/><path d="M910 265.5H1280" stroke="#a0a0a0" stroke-width="1"/><path d="M910 283.5H1280" stroke="#a0a0a0" stroke-width="1"/><path d="M910 301.5H1280" stroke="#a0a0a0" stroke-width="1"/><path d="M910 319.5H1280" stroke="#a0a0a0" stroke-width="1"/><path d="M910 337.5H1280" stroke="#a0a0a0" stroke-width="1"/><path d="M910 355.5H1280" stroke="#a0a0a0" stroke-width="1"/><path d="M910 373.5H1280" stroke="#a0a0a0" stroke-width="1"/><path d="M1053.5 247V373" stroke="#a0a0a0"/><path d="M1101.5 247V373" stroke="#a0a0a0"/><path d="M1149.5 247V373" stroke="#a0a0a0"/><path d="M1197.5 247V373" stroke="#a0a0a0"/><path d="M1245.5 247V373" stroke="#a0a0a0"/><path d="M1293.5 247V373" stroke="#a0a0a0"/><path d="M1028.5 229V373" stroke="#808080"/><rect x="1053" y="247" width="24" height="18" fill="#c0c0c0"/><rect x="1101" y="265" width="24" height="18" fill="#5a8632"/><rect x="1149" y="265" width="24" height="18" fill="#5a8632"/><rect x="1197" y="265" width="24" height="18" fill="#0a8ab8"/><rect x="1245" y="265" width="24" height="18" fill="#5a8632"/><rect x="1101" y="283" width="24" height="18" fill="#8c8a0a"/><rect x="1149" y="283" width="24" height="18" fill="#ff0000"/><rect x="1197" y="283" width="24" height="18" fill="#aef4c8"/><rect x="1245" y="283" width="24" height="18" fill="#5a8632"/><rect x="1101" y="301" width="24" height="18" fill="#5a8632"/><rect x="1149" y="301" width="24" height="18" fill="#5a8632"/><rect x="1197" y="301" width="24" height="18" fill="#0a8ab8"/><rect x="1245" y="301" width="24" height="18" fill="#5a8632"/><rect x="1101" y="319" width="24" height="18" fill="#5a8632"/><rect x="1149" y="319" width="24" height="18" fill="#5a8632"/><rect x="1197" y="319" width="24" height="18" fill="#0a8ab8"/><rect x="1245" y="319" width="24" height="18" fill="#5a8632"/><rect x="1101" y="337" width="24" height="18" fill="#5a8632"/><rect x="1149" y="337" width="24" height="18" fill="#96c8f6"/><rect x="1197" y="337" width="24" height="18" fill="#bcdcf8"/><rect x="1245" y="337" width="24" height="18" fill="#5a8632"/><rect x="1101" y="355" width="24" height="18" fill="#8c8a0a"/><rect x="1149" y="355" width="24" height="18" fill="#96c8f6"/><rect x="1197" y="355" width="24" height="18" fill="#ffff00"/><rect x="1245" y="355" width="24" height="18" fill="#5a8632"/><rect x="1076" y="229" width="3" height="144" fill="#000"/><rect x="1124" y="229" width="3" height="144" fill="#000"/><rect x="1172" y="229" width="3" height="144" fill="#000"/><rect x="1220" y="229" width="3" height="144" fill="#000"/><rect x="1268" y="229" width="3" height="144" fill="#000"/><rect x="1028" y="229" width="2" height="144" fill="#101010"/><rect x="1029" y="246" width="251" height="3" fill="#000"/><rect x="1029" y="264" width="251" height="3" fill="#000"/><rect x="1033.5" y="250.5" width="12" height="12" fill="#fff" stroke="#000" stroke-width="1.2"/><rect x="1081.5" y="250.5" width="12" height="12" fill="#fff" stroke="#000" stroke-width="1.2"/><rect x="1129.5" y="250.5" width="12" height="12" fill="#fff" stroke="#000" stroke-width="1.2"/><rect x="1177.5" y="250.5" width="12" height="12" fill="#fff" stroke="#000" stroke-width="1.2"/><rect x="1225.5" y="250.5" width="12" height="12" fill="#fff" stroke="#000" stroke-width="1.2"/><rect x="1273.5" y="250.5" width="12" height="12" fill="#fff" stroke="#000" stroke-width="1.2"/><rect x="1033.5" y="268.5" width="12" height="12" fill="#fff" stroke="#000" stroke-width="1.2"/><rect x="1081.5" y="268.5" width="12" height="12" fill="#fff" stroke="#000" stroke-width="1.2"/><rect x="1129.5" y="268.5" width="12" height="12" fill="#fff" stroke="#000" stroke-width="1.2"/><rect x="1177.5" y="268.5" width="12" height="12" fill="#fff" stroke="#000" stroke-width="1.2"/><rect x="1225.5" y="268.5" width="12" height="12" fill="#fff" stroke="#000" stroke-width="1.2"/><rect x="1273.5" y="268.5" width="12" height="12" fill="#fff" stroke="#000" stroke-width="1.2"/><rect x="1033.5" y="286.5" width="12" height="12" fill="#fff" stroke="#000" stroke-width="1.2"/><rect x="1081.5" y="286.5" width="12" height="12" fill="#fff" stroke="#000" stroke-width="1.2"/><rect x="1129.5" y="286.5" width="12" height="12" fill="#fff" stroke="#000" stroke-width="1.2"/><rect x="1177.5" y="286.5" width="12" height="12" fill="#fff" stroke="#000" stroke-width="1.2"/><rect x="1225.5" y="286.5" width="12" height="12" fill="#fff" stroke="#000" stroke-width="1.2"/><rect x="1273.5" y="286.5" width="12" height="12" fill="#fff" stroke="#000" stroke-width="1.2"/><rect x="1033.5" y="304.5" width="12" height="12" fill="#fff" stroke="#000" stroke-width="1.2"/><rect x="1081.5" y="304.5" width="12" height="12" fill="#fff" stroke="#000" stroke-width="1.2"/><rect x="1129.5" y="304.5" width="12" height="12" fill="#fff" stroke="#000" stroke-width="1.2"/><rect x="1177.5" y="304.5" width="12" height="12" fill="#fff" stroke="#000" stroke-width="1.2"/><rect x="1225.5" y="304.5" width="12" height="12" fill="#fff" stroke="#000" stroke-width="1.2"/><rect x="1273.5" y="304.5" width="12" height="12" fill="#fff" stroke="#000" stroke-width="1.2"/><rect x="1033.5" y="322.5" width="12" height="12" fill="#fff" stroke="#000" stroke-width="1.2"/><rect x="1081.5" y="322.5" width="12" height="12" fill="#fff" stroke="#000" stroke-width="1.2"/><rect x="1129.5" y="322.5" width="12" height="12" fill="#fff" stroke="#000" stroke-width="1.2"/><rect x="1177.5" y="322.5" width="12" height="12" fill="#fff" stroke="#000" stroke-width="1.2"/><rect x="1225.5" y="322.5" width="12" height="12" fill="#fff" stroke="#000" stroke-width="1.2"/><rect x="1273.5" y="322.5" width="12" height="12" fill="#fff" stroke="#000" stroke-width="1.2"/><rect x="1033.5" y="340.5" width="12" height="12" fill="#fff" stroke="#000" stroke-width="1.2"/><rect x="1081.5" y="340.5" width="12" height="12" fill="#fff" stroke="#000" stroke-width="1.2"/><rect x="1129.5" y="340.5" width="12" height="12" fill="#fff" stroke="#000" stroke-width="1.2"/><rect x="1177.5" y="340.5" width="12" height="12" fill="#fff" stroke="#000" stroke-width="1.2"/><rect x="1225.5" y="340.5" width="12" height="12" fill="#fff" stroke="#000" stroke-width="1.2"/><rect x="1273.5" y="340.5" width="12" height="12" fill="#fff" stroke="#000" stroke-width="1.2"/><rect x="1033.5" y="358.5" width="12" height="12" fill="#fff" stroke="#000" stroke-width="1.2"/><rect x="1081.5" y="358.5" width="12" height="12" fill="#fff" stroke="#000" stroke-width="1.2"/><rect x="1129.5" y="358.5" width="12" height="12" fill="#fff" stroke="#000" stroke-width="1.2"/><rect x="1177.5" y="358.5" width="12" height="12" fill="#fff" stroke="#000" stroke-width="1.2"/><rect x="1225.5" y="358.5" width="12" height="12" fill="#fff" stroke="#000" stroke-width="1.2"/><rect x="1273.5" y="358.5" width="12" height="12" fill="#fff" stroke="#000" stroke-width="1.2"/><path d="M1177.5 358.5 l12 12 M1189.5 358.5 l-12 12" stroke="#000" stroke-width="1"/></svg>
<div class="mono" style="left:940px;top:233px">Subclasses</div>
<div class="mono" style="left:1045px;top:233px">All</div>
<div class="mono" style="left:1083px;top:233px">CmpVal</div>
<div class="mono" style="left:1128px;top:233px">DevType</div>
<div class="mono" style="left:1181px;top:233px">RefDes</div>
<div class="mono" style="left:1233px;top:233px">Tol.</div>
<div class="mono" style="left:1272px;top:233px">U</div>
<div class="mono" style="left:912px;top:249px">All</div>
<div class="mono" style="left:912px;top:267px">Assembly_Bottom</div>
<div class="mono" style="left:912px;top:285px">Assembly_Top</div>
<div class="mono" style="left:912px;top:303px">Display_Bottom</div>
<div class="mono" style="left:912px;top:321px">Display_Top</div>
<div class="mono" style="left:912px;top:339px">Silkscreen_Bottom</div>
<div class="mono" style="left:912px;top:357px">Silkscreen_Top</div>
<div class="btn" style="left:908px;top:573px;width:16px;height:16px"></div>
<svg class="a" style="left:913px;top:577px" width="6" height="8" viewBox="0 0 6 8"><path d="M5 0 V8 L1 4z" fill="#a0a0a0"/></svg>
<div class="btn" style="left:924px;top:573px;width:16px;height:16px"></div>
<svg class="a" style="left:930px;top:577px" width="6" height="8" viewBox="0 0 6 8"><path d="M1 0 V8 L5 4z" fill="#a0a0a0"/></svg>
<div class="a" style="left:962px;top:573px;width:175px;height:1px;background:#000"></div>
<div class="a" style="left:1136px;top:573px;width:1px;height:17px;background:#404040"></div>
<svg class="a" style="left:940px;top:573px" width="24" height="17" viewBox="0 0 24 17"><path d="M0 0.5 H3 L8 16 H16 L21 0.5 H24" fill="#fff" stroke="#000" stroke-width="1.2"/></svg>
<div class="a" style="left:1140px;top:573px;width:140px;height:16px;background:#d4d0c8;border-top:1px solid #fff;border-bottom:1px solid #404040"></div>
<div class="btn" style="left:1140px;top:573px;width:16px;height:16px"></div>
<svg class="a" style="left:1145px;top:577px" width="6" height="8" viewBox="0 0 6 8"><path d="M5 0 V8 L1 4z" fill="#000"/></svg>
<div class="a" style="left:761px;top:605px;width:293px;height:179px;border:1px solid #808080;box-shadow:inset 1px 1px 0 #fff, 1px 1px 0 #fff"></div>
<div class="glab" style="left:766px;top:599px">Color</div>
<div class="a" style="left:768px;top:614px;width:277px;height:112px;background:#ecebe8;border-top:1px solid #fff;border-left:1px solid #fff;border-right:2px solid #404040;border-bottom:2px solid #404040"></div>
<svg class="a" style="left:768px;top:614px" width="277" height="112" viewBox="768 614 277 112"><rect x="771" y="617" width="14" height="14" fill="#ff0000"/><path d="M771.5 631V617.5H785" stroke="#404040" stroke-width="1.6" fill="none"/><path d="M772 631.5H785.5V618" stroke="#fff" fill="none"/><rect x="788" y="617" width="14" height="14" fill="#000000"/><path d="M788.5 631V617.5H802" stroke="#404040" stroke-width="1.6" fill="none"/><path d="M789 631.5H802.5V618" stroke="#fff" fill="none"/><rect x="805" y="617" width="14" height="14" fill="#5a4a42"/><path d="M805.5 631V617.5H819" stroke="#404040" stroke-width="1.6" fill="none"/><path d="M806 631.5H819.5V618" stroke="#fff" fill="none"/><rect x="822" y="617" width="14" height="14" fill="#7a4030"/><path d="M822.5 631V617.5H836" stroke="#404040" stroke-width="1.6" fill="none"/><path d="M823 631.5H836.5V618" stroke="#fff" fill="none"/><rect x="839" y="617" width="14" height="14" fill="#b0101e"/><path d="M839.5 631V617.5H853" stroke="#404040" stroke-width="1.6" fill="none"/><path d="M840 631.5H853.5V618" stroke="#fff" fill="none"/><rect x="856" y="617" width="14" height="14" fill="#b05a10"/><path d="M856.5 631V617.5H870" stroke="#404040" stroke-width="1.6" fill="none"/><path d="M857 631.5H870.5V618" stroke="#fff" fill="none"/><rect x="873" y="617" width="14" height="14" fill="#a0a010"/><path d="M873.5 631V617.5H887" stroke="#404040" stroke-width="1.6" fill="none"/><path d="M874 631.5H887.5V618" stroke="#fff" fill="none"/><rect x="890" y="617" width="14" height="14" fill="#4e6a30"/><path d="M890.5 631V617.5H904" stroke="#404040" stroke-width="1.6" fill="none"/><path d="M891 631.5H904.5V618" stroke="#fff" fill="none"/><rect x="907" y="617" width="14" height="14" fill="#108010"/><path d="M907.5 631V617.5H921" stroke="#404040" stroke-width="1.6" fill="none"/><path d="M908 631.5H921.5V618" stroke="#fff" fill="none"/><rect x="924" y="617" width="14" height="14" fill="#108060"/><path d="M924.5 631V617.5H938" stroke="#404040" stroke-width="1.6" fill="none"/><path d="M925 631.5H938.5V618" stroke="#fff" fill="none"/><rect x="941" y="617" width="14" height="14" fill="#107090"/><path d="M941.5 631V617.5H955" stroke="#404040" stroke-width="1.6" fill="none"/><path d="M942 631.5H955.5V618" stroke="#fff" fill="none"/><rect x="958" y="617" width="14" height="14" fill="#1060b0"/><path d="M958.5 631V617.5H972" stroke="#404040" stroke-width="1.6" fill="none"/><path d="M959 631.5H972.5V618" stroke="#fff" fill="none"/><rect x="975" y="617" width="14" height="14" fill="#0a1090"/><path d="M975.5 631V617.5H989" stroke="#404040" stroke-width="1.6" fill="none"/><path d="M976 631.5H989.5V618" stroke="#fff" fill="none"/><rect x="992" y="617" width="14" height="14" fill="#501090"/><path d="M992.5 631V617.5H1006" stroke="#404040" stroke-width="1.6" fill="none"/><path d="M993 631.5H1006.5V618" stroke="#fff" fill="none"/><rect x="1009" y="617" width="14" height="14" fill="#800a90"/><path d="M1009.5 631V617.5H1023" stroke="#404040" stroke-width="1.6" fill="none"/><path d="M1010 631.5H1023.5V618" stroke="#fff" fill="none"/><rect x="1026" y="617" width="14" height="14" fill="#900a40"/><path d="M1026.5 631V617.5H1040" stroke="#404040" stroke-width="1.6" fill="none"/><path d="M1027 631.5H1040.5V618" stroke="#fff" fill="none"/><rect x="771" y="635" width="14" height="14" fill="#ffff00"/><path d="M771.5 649V635.5H785" stroke="#404040" stroke-width="1.6" fill="none"/><path d="M772 649.5H785.5V636" stroke="#fff" fill="none"/><rect x="788" y="635" width="14" height="14" fill="#555555"/><path d="M788.5 649V635.5H802" stroke="#404040" stroke-width="1.6" fill="none"/><path d="M789 649.5H802.5V636" stroke="#fff" fill="none"/><rect x="805" y="635" width="14" height="14" fill="#806a5e"/><path d="M805.5 649V635.5H819" stroke="#404040" stroke-width="1.6" fill="none"/><path d="M806 649.5H819.5V636" stroke="#fff" fill="none"/><rect x="822" y="635" width="14" height="14" fill="#a86050"/><path d="M822.5 649V635.5H836" stroke="#404040" stroke-width="1.6" fill="none"/><path d="M823 649.5H836.5V636" stroke="#fff" fill="none"/><rect x="839" y="635" width="14" height="14" fill="#e01020"/><path d="M839.5 649V635.5H853" stroke="#404040" stroke-width="1.6" fill="none"/><path d="M840 649.5H853.5V636" stroke="#fff" fill="none"/><rect x="856" y="635" width="14" height="14" fill="#e87a10"/><path d="M856.5 649V635.5H870" stroke="#404040" stroke-width="1.6" fill="none"/><path d="M857 649.5H870.5V636" stroke="#fff" fill="none"/><rect x="873" y="635" width="14" height="14" fill="#c0b010"/><path d="M873.5 649V635.5H887" stroke="#404040" stroke-width="1.6" fill="none"/><path d="M874 649.5H887.5V636" stroke="#fff" fill="none"/><rect x="890" y="635" width="14" height="14" fill="#6a9a3a"/><path d="M890.5 649V635.5H904" stroke="#404040" stroke-width="1.6" fill="none"/><path d="M891 649.5H904.5V636" stroke="#fff" fill="none"/><rect x="907" y="635" width="14" height="14" fill="#10a010"/><path d="M907.5 649V635.5H921" stroke="#404040" stroke-width="1.6" fill="none"/><path d="M908 649.5H921.5V636" stroke="#fff" fill="none"/><rect x="924" y="635" width="14" height="14" fill="#10a080"/><path d="M924.5 649V635.5H938" stroke="#404040" stroke-width="1.6" fill="none"/><path d="M925 649.5H938.5V636" stroke="#fff" fill="none"/><rect x="941" y="635" width="14" height="14" fill="#1090b8"/><path d="M941.5 649V635.5H955" stroke="#404040" stroke-width="1.6" fill="none"/><path d="M942 649.5H955.5V636" stroke="#fff" fill="none"/><rect x="958" y="635" width="14" height="14" fill="#1070d8"/><path d="M958.5 649V635.5H972" stroke="#404040" stroke-width="1.6" fill="none"/><path d="M959 649.5H972.5V636" stroke="#fff" fill="none"/><rect x="975" y="635" width="14" height="14" fill="#0a10e8"/><path d="M975.5 649V635.5H989" stroke="#404040" stroke-width="1.6" fill="none"/><path d="M976 649.5H989.5V636" stroke="#fff" fill="none"/><rect x="992" y="635" width="14" height="14" fill="#8010d0"/><path d="M992.5 649V635.5H1006" stroke="#404040" stroke-width="1.6" fill="none"/><path d="M993 649.5H1006.5V636" stroke="#fff" fill="none"/><rect x="1009" y="635" width="14" height="14" fill="#b010c0"/><path d="M1009.5 649V635.5H1023" stroke="#404040" stroke-width="1.6" fill="none"/><path d="M1010 649.5H1023.5V636" stroke="#fff" fill="none"/><rect x="1026" y="635" width="14" height="14" fill="#d01060"/><path d="M1026.5 649V635.5H1040" stroke="#404040" stroke-width="1.6" fill="none"/><path d="M1027 649.5H1040.5V636" stroke="#fff" fill="none"/><rect x="771" y="653" width="14" height="14" fill="#00ff00"/><path d="M771.5 667V653.5H785" stroke="#404040" stroke-width="1.6" fill="none"/><path d="M772 667.5H785.5V654" stroke="#fff" fill="none"/><rect x="788" y="653" width="14" height="14" fill="#808080"/><path d="M788.5 667V653.5H802" stroke="#404040" stroke-width="1.6" fill="none"/><path d="M789 667.5H802.5V654" stroke="#fff" fill="none"/><rect x="805" y="653" width="14" height="14" fill="#9a8272"/><path d="M805.5 667V653.5H819" stroke="#404040" stroke-width="1.6" fill="none"/><path d="M806 667.5H819.5V654" stroke="#fff" fill="none"/><rect x="822" y="653" width="14" height="14" fill="#c88070"/><path d="M822.5 667V653.5H836" stroke="#404040" stroke-width="1.6" fill="none"/><path d="M823 667.5H836.5V654" stroke="#fff" fill="none"/><rect x="839" y="653" width="14" height="14" fill="#f04050"/><path d="M839.5 667V653.5H853" stroke="#404040" stroke-width="1.6" fill="none"/><path d="M840 667.5H853.5V654" stroke="#fff" fill="none"/><rect x="856" y="653" width="14" height="14" fill="#f09030"/><path d="M856.5 667V653.5H870" stroke="#404040" stroke-width="1.6" fill="none"/><path d="M857 667.5H870.5V654" stroke="#fff" fill="none"/><rect x="873" y="653" width="14" height="14" fill="#d8d010"/><path d="M873.5 667V653.5H887" stroke="#404040" stroke-width="1.6" fill="none"/><path d="M874 667.5H887.5V654" stroke="#fff" fill="none"/><rect x="890" y="653" width="14" height="14" fill="#80b04a"/><path d="M890.5 667V653.5H904" stroke="#404040" stroke-width="1.6" fill="none"/><path d="M891 667.5H904.5V654" stroke="#fff" fill="none"/><rect x="907" y="653" width="14" height="14" fill="#10d020"/><path d="M907.5 667V653.5H921" stroke="#404040" stroke-width="1.6" fill="none"/><path d="M908 667.5H921.5V654" stroke="#fff" fill="none"/><rect x="924" y="653" width="14" height="14" fill="#20c090"/><path d="M924.5 667V653.5H938" stroke="#404040" stroke-width="1.6" fill="none"/><path d="M925 667.5H938.5V654" stroke="#fff" fill="none"/><rect x="941" y="653" width="14" height="14" fill="#10b8e8"/><path d="M941.5 667V653.5H955" stroke="#404040" stroke-width="1.6" fill="none"/><path d="M942 667.5H955.5V654" stroke="#fff" fill="none"/><rect x="958" y="653" width="14" height="14" fill="#2890f0"/><path d="M958.5 667V653.5H972" stroke="#404040" stroke-width="1.6" fill="none"/><path d="M959 667.5H972.5V654" stroke="#fff" fill="none"/><rect x="975" y="653" width="14" height="14" fill="#5050e0"/><path d="M975.5 667V653.5H989" stroke="#404040" stroke-width="1.6" fill="none"/><path d="M976 667.5H989.5V654" stroke="#fff" fill="none"/><rect x="992" y="653" width="14" height="14" fill="#a040e0"/><path d="M992.5 667V653.5H1006" stroke="#404040" stroke-width="1.6" fill="none"/><path d="M993 667.5H1006.5V654" stroke="#fff" fill="none"/><rect x="1009" y="653" width="14" height="14" fill="#e010e0"/><path d="M1009.5 667V653.5H1023" stroke="#404040" stroke-width="1.6" fill="none"/><path d="M1010 667.5H1023.5V654" stroke="#fff" fill="none"/><rect x="1026" y="653" width="14" height="14" fill="#f03090"/><path d="M1026.5 667V653.5H1040" stroke="#404040" stroke-width="1.6" fill="none"/><path d="M1027 667.5H1040.5V654" stroke="#fff" fill="none"/><rect x="771" y="671" width="14" height="14" fill="#0000ff"/><path d="M771.5 685V671.5H785" stroke="#404040" stroke-width="1.6" fill="none"/><path d="M772 685.5H785.5V672" stroke="#fff" fill="none"/><rect x="788" y="671" width="14" height="14" fill="#a0a0a0"/><path d="M788.5 685V671.5H802" stroke="#404040" stroke-width="1.6" fill="none"/><path d="M789 685.5H802.5V672" stroke="#fff" fill="none"/><rect x="805" y="671" width="14" height="14" fill="#b09a8a"/><path d="M805.5 685V671.5H819" stroke="#404040" stroke-width="1.6" fill="none"/><path d="M806 685.5H819.5V672" stroke="#fff" fill="none"/><rect x="822" y="671" width="14" height="14" fill="#d89a88"/><path d="M822.5 685V671.5H836" stroke="#404040" stroke-width="1.6" fill="none"/><path d="M823 685.5H836.5V672" stroke="#fff" fill="none"/><rect x="839" y="671" width="14" height="14" fill="#f07080"/><path d="M839.5 685V671.5H853" stroke="#404040" stroke-width="1.6" fill="none"/><path d="M840 685.5H853.5V672" stroke="#fff" fill="none"/><rect x="856" y="671" width="14" height="14" fill="#f0a060"/><path d="M856.5 685V671.5H870" stroke="#404040" stroke-width="1.6" fill="none"/><path d="M857 685.5H870.5V672" stroke="#fff" fill="none"/><rect x="873" y="671" width="14" height="14" fill="#f0f020"/><path d="M873.5 685V671.5H887" stroke="#404040" stroke-width="1.6" fill="none"/><path d="M874 685.5H887.5V672" stroke="#fff" fill="none"/><rect x="890" y="671" width="14" height="14" fill="#90c070"/><path d="M890.5 685V671.5H904" stroke="#404040" stroke-width="1.6" fill="none"/><path d="M891 685.5H904.5V672" stroke="#fff" fill="none"/><rect x="907" y="671" width="14" height="14" fill="#20f030"/><path d="M907.5 685V671.5H921" stroke="#404040" stroke-width="1.6" fill="none"/><path d="M908 685.5H921.5V672" stroke="#fff" fill="none"/><rect x="924" y="671" width="14" height="14" fill="#30e0a0"/><path d="M924.5 685V671.5H938" stroke="#404040" stroke-width="1.6" fill="none"/><path d="M925 685.5H938.5V672" stroke="#fff" fill="none"/><rect x="941" y="671" width="14" height="14" fill="#20c8f0"/><path d="M941.5 685V671.5H955" stroke="#404040" stroke-width="1.6" fill="none"/><path d="M942 685.5H955.5V672" stroke="#fff" fill="none"/><rect x="958" y="671" width="14" height="14" fill="#50a0f0"/><path d="M958.5 685V671.5H972" stroke="#404040" stroke-width="1.6" fill="none"/><path d="M959 685.5H972.5V672" stroke="#fff" fill="none"/><rect x="975" y="671" width="14" height="14" fill="#7070f0"/><path d="M975.5 685V671.5H989" stroke="#404040" stroke-width="1.6" fill="none"/><path d="M976 685.5H989.5V672" stroke="#fff" fill="none"/><rect x="992" y="671" width="14" height="14" fill="#c070f0"/><path d="M992.5 685V671.5H1006" stroke="#404040" stroke-width="1.6" fill="none"/><path d="M993 685.5H1006.5V672" stroke="#fff" fill="none"/><rect x="1009" y="671" width="14" height="14" fill="#f050f0"/><path d="M1009.5 685V671.5H1023" stroke="#404040" stroke-width="1.6" fill="none"/><path d="M1010 685.5H1023.5V672" stroke="#fff" fill="none"/><rect x="1026" y="671" width="14" height="14" fill="#f070b0"/><path d="M1026.5 685V671.5H1040" stroke="#404040" stroke-width="1.6" fill="none"/><path d="M1027 685.5H1040.5V672" stroke="#fff" fill="none"/><rect x="771" y="689" width="14" height="14" fill="#ff00ff"/><path d="M771.5 703V689.5H785" stroke="#404040" stroke-width="1.6" fill="none"/><path d="M772 703.5H785.5V690" stroke="#fff" fill="none"/><rect x="788" y="689" width="14" height="14" fill="#d4d4d4"/><path d="M788.5 703V689.5H802" stroke="#404040" stroke-width="1.6" fill="none"/><path d="M789 703.5H802.5V690" stroke="#fff" fill="none"/><rect x="805" y="689" width="14" height="14" fill="#c0b0a0"/><path d="M805.5 703V689.5H819" stroke="#404040" stroke-width="1.6" fill="none"/><path d="M806 703.5H819.5V690" stroke="#fff" fill="none"/><rect x="822" y="689" width="14" height="14" fill="#e8b4a4"/><path d="M822.5 703V689.5H836" stroke="#404040" stroke-width="1.6" fill="none"/><path d="M823 703.5H836.5V690" stroke="#fff" fill="none"/><rect x="839" y="689" width="14" height="14" fill="#f8a0b0"/><path d="M839.5 703V689.5H853" stroke="#404040" stroke-width="1.6" fill="none"/><path d="M840 703.5H853.5V690" stroke="#fff" fill="none"/><rect x="856" y="689" width="14" height="14" fill="#f0c090"/><path d="M856.5 703V689.5H870" stroke="#404040" stroke-width="1.6" fill="none"/><path d="M857 703.5H870.5V690" stroke="#fff" fill="none"/><rect x="873" y="689" width="14" height="14" fill="#f8f880"/><path d="M873.5 703V689.5H887" stroke="#404040" stroke-width="1.6" fill="none"/><path d="M874 703.5H887.5V690" stroke="#fff" fill="none"/><rect x="890" y="689" width="14" height="14" fill="#b0d8a0"/><path d="M890.5 703V689.5H904" stroke="#404040" stroke-width="1.6" fill="none"/><path d="M891 703.5H904.5V690" stroke="#fff" fill="none"/><rect x="907" y="689" width="14" height="14" fill="#80f080"/><path d="M907.5 703V689.5H921" stroke="#404040" stroke-width="1.6" fill="none"/><path d="M908 703.5H921.5V690" stroke="#fff" fill="none"/><rect x="924" y="689" width="14" height="14" fill="#60f0c0"/><path d="M924.5 703V689.5H938" stroke="#404040" stroke-width="1.6" fill="none"/><path d="M925 703.5H938.5V690" stroke="#fff" fill="none"/><rect x="941" y="689" width="14" height="14" fill="#70d8f8"/><path d="M941.5 703V689.5H955" stroke="#404040" stroke-width="1.6" fill="none"/><path d="M942 703.5H955.5V690" stroke="#fff" fill="none"/><rect x="958" y="689" width="14" height="14" fill="#90c4f8"/><path d="M958.5 703V689.5H972" stroke="#404040" stroke-width="1.6" fill="none"/><path d="M959 703.5H972.5V690" stroke="#fff" fill="none"/><rect x="975" y="689" width="14" height="14" fill="#a0a8f8"/><path d="M975.5 703V689.5H989" stroke="#404040" stroke-width="1.6" fill="none"/><path d="M976 703.5H989.5V690" stroke="#fff" fill="none"/><rect x="992" y="689" width="14" height="14" fill="#d0a0f8"/><path d="M992.5 703V689.5H1006" stroke="#404040" stroke-width="1.6" fill="none"/><path d="M993 703.5H1006.5V690" stroke="#fff" fill="none"/><rect x="1009" y="689" width="14" height="14" fill="#f8a0f8"/><path d="M1009.5 703V689.5H1023" stroke="#404040" stroke-width="1.6" fill="none"/><path d="M1010 703.5H1023.5V690" stroke="#fff" fill="none"/><rect x="1026" y="689" width="14" height="14" fill="#f8a0d0"/><path d="M1026.5 703V689.5H1040" stroke="#404040" stroke-width="1.6" fill="none"/><path d="M1027 703.5H1040.5V690" stroke="#fff" fill="none"/><rect x="771" y="707" width="14" height="14" fill="#00ffff"/><path d="M771.5 721V707.5H785" stroke="#404040" stroke-width="1.6" fill="none"/><path d="M772 721.5H785.5V708" stroke="#fff" fill="none"/><rect x="788" y="707" width="14" height="14" fill="#ffffff"/><path d="M788.5 721V707.5H802" stroke="#404040" stroke-width="1.6" fill="none"/><path d="M789 721.5H802.5V708" stroke="#fff" fill="none"/><rect x="805" y="707" width="14" height="14" fill="#d0c4b4"/><path d="M805.5 721V707.5H819" stroke="#404040" stroke-width="1.6" fill="none"/><path d="M806 721.5H819.5V708" stroke="#fff" fill="none"/><rect x="822" y="707" width="14" height="14" fill="#e8c8c0"/><path d="M822.5 721V707.5H836" stroke="#404040" stroke-width="1.6" fill="none"/><path d="M823 721.5H836.5V708" stroke="#fff" fill="none"/><rect x="839" y="707" width="14" height="14" fill="#f8c0c8"/><path d="M839.5 721V707.5H853" stroke="#404040" stroke-width="1.6" fill="none"/><path d="M840 721.5H853.5V708" stroke="#fff" fill="none"/><rect x="856" y="707" width="14" height="14" fill="#f8d8b8"/><path d="M856.5 721V707.5H870" stroke="#404040" stroke-width="1.6" fill="none"/><path d="M857 721.5H870.5V708" stroke="#fff" fill="none"/><rect x="873" y="707" width="14" height="14" fill="#fff8b8"/><path d="M873.5 721V707.5H887" stroke="#404040" stroke-width="1.6" fill="none"/><path d="M874 721.5H887.5V708" stroke="#fff" fill="none"/><rect x="890" y="707" width="14" height="14" fill="#d0e4c0"/><path d="M890.5 721V707.5H904" stroke="#404040" stroke-width="1.6" fill="none"/><path d="M891 721.5H904.5V708" stroke="#fff" fill="none"/><rect x="907" y="707" width="14" height="14" fill="#b0f8b0"/><path d="M907.5 721V707.5H921" stroke="#404040" stroke-width="1.6" fill="none"/><path d="M908 721.5H921.5V708" stroke="#fff" fill="none"/><rect x="924" y="707" width="14" height="14" fill="#a0f8e0"/><path d="M924.5 721V707.5H938" stroke="#404040" stroke-width="1.6" fill="none"/><path d="M925 721.5H938.5V708" stroke="#fff" fill="none"/><rect x="941" y="707" width="14" height="14" fill="#b0ecf8"/><path d="M941.5 721V707.5H955" stroke="#404040" stroke-width="1.6" fill="none"/><path d="M942 721.5H955.5V708" stroke="#fff" fill="none"/><rect x="958" y="707" width="14" height="14" fill="#c0dcf8"/><path d="M958.5 721V707.5H972" stroke="#404040" stroke-width="1.6" fill="none"/><path d="M959 721.5H972.5V708" stroke="#fff" fill="none"/><rect x="975" y="707" width="14" height="14" fill="#c0c8f8"/><path d="M975.5 721V707.5H989" stroke="#404040" stroke-width="1.6" fill="none"/><path d="M976 721.5H989.5V708" stroke="#fff" fill="none"/><rect x="992" y="707" width="14" height="14" fill="#e0c8f8"/><path d="M992.5 721V707.5H1006" stroke="#404040" stroke-width="1.6" fill="none"/><path d="M993 721.5H1006.5V708" stroke="#fff" fill="none"/><rect x="1009" y="707" width="14" height="14" fill="#f8c8f8"/><path d="M1009.5 721V707.5H1023" stroke="#404040" stroke-width="1.6" fill="none"/><path d="M1010 721.5H1023.5V708" stroke="#fff" fill="none"/><rect x="1026" y="707" width="14" height="14" fill="#f8c8e8"/><path d="M1026.5 721V707.5H1040" stroke="#404040" stroke-width="1.6" fill="none"/><path d="M1027 721.5H1040.5V708" stroke="#fff" fill="none"/><rect x="905.5" y="705.5" width="17" height="17" fill="none" stroke="#000" stroke-width="1.4"/></svg>
<div class="btn" style="left:766px;top:755px;width:66px;height:21px"></div>
<div class="t" style="left:766px;top:759px;width:66px;text-align:center;font-size:11px;color:#000;">Next &gt;&gt;</div>
<div class="btn" style="left:964px;top:755px;width:81px;height:21px"></div>
<div class="t" style="left:964px;top:759px;width:81px;text-align:center;font-size:11px;color:#000;">Customize ...</div>
<div class="a" style="left:1062px;top:603px;width:69px;height:91px;border:1px solid #808080;box-shadow:inset 1px 1px 0 #fff, 1px 1px 0 #fff"></div>
<div class="glab" style="left:1067px;top:597px">Selected</div>
<div class="a" style="left:1062px;top:695px;width:69px;height:88px;border:1px solid #808080;box-shadow:inset 1px 1px 0 #fff, 1px 1px 0 #fff"></div>
<div class="glab" style="left:1067px;top:689px">New</div>
<div class="a" style="left:1069px;top:616px;width:56px;height:68px;background:#ffff00;border-top:1px solid #808080;border-left:1px solid #808080;border-right:1px solid #fff;border-bottom:1px solid #fff"></div>
<div class="a" style="left:1069px;top:708px;width:56px;height:66px;background:#ffff00;border-top:1px solid #808080;border-left:1px solid #808080;border-right:1px solid #fff;border-bottom:1px solid #fff"></div>
<div class="btn" style="left:760px;top:798px;width:75px;height:24px"></div>
<div class="t" style="left:760px;top:804px;width:75px;text-align:center;font-size:11px;color:#000;">OK</div>
<div class="btn" style="left:845px;top:798px;width:75px;height:24px"></div>
<div class="t" style="left:845px;top:804px;width:75px;text-align:center;font-size:11px;color:#000;">Cancel</div>
<div class="btn" style="left:933px;top:798px;width:76px;height:24px"></div>
<div class="t" style="left:933px;top:804px;width:76px;text-align:center;font-size:11px;color:#a0a0a0;text-shadow:1px 1px 0 #fff;">Apply</div>
<div class="btn" style="left:1016px;top:798px;width:75px;height:24px"></div>
<div class="t" style="left:1016px;top:804px;width:75px;text-align:center;font-size:11px;color:#a0a0a0;text-shadow:1px 1px 0 #fff;">Reset</div>
<div class="btn" style="left:1105px;top:798px;width:75px;height:24px"></div>
<div class="t" style="left:1105px;top:804px;width:75px;text-align:center;font-size:11px;color:#000;">Hide Palette</div>
</body></html>
